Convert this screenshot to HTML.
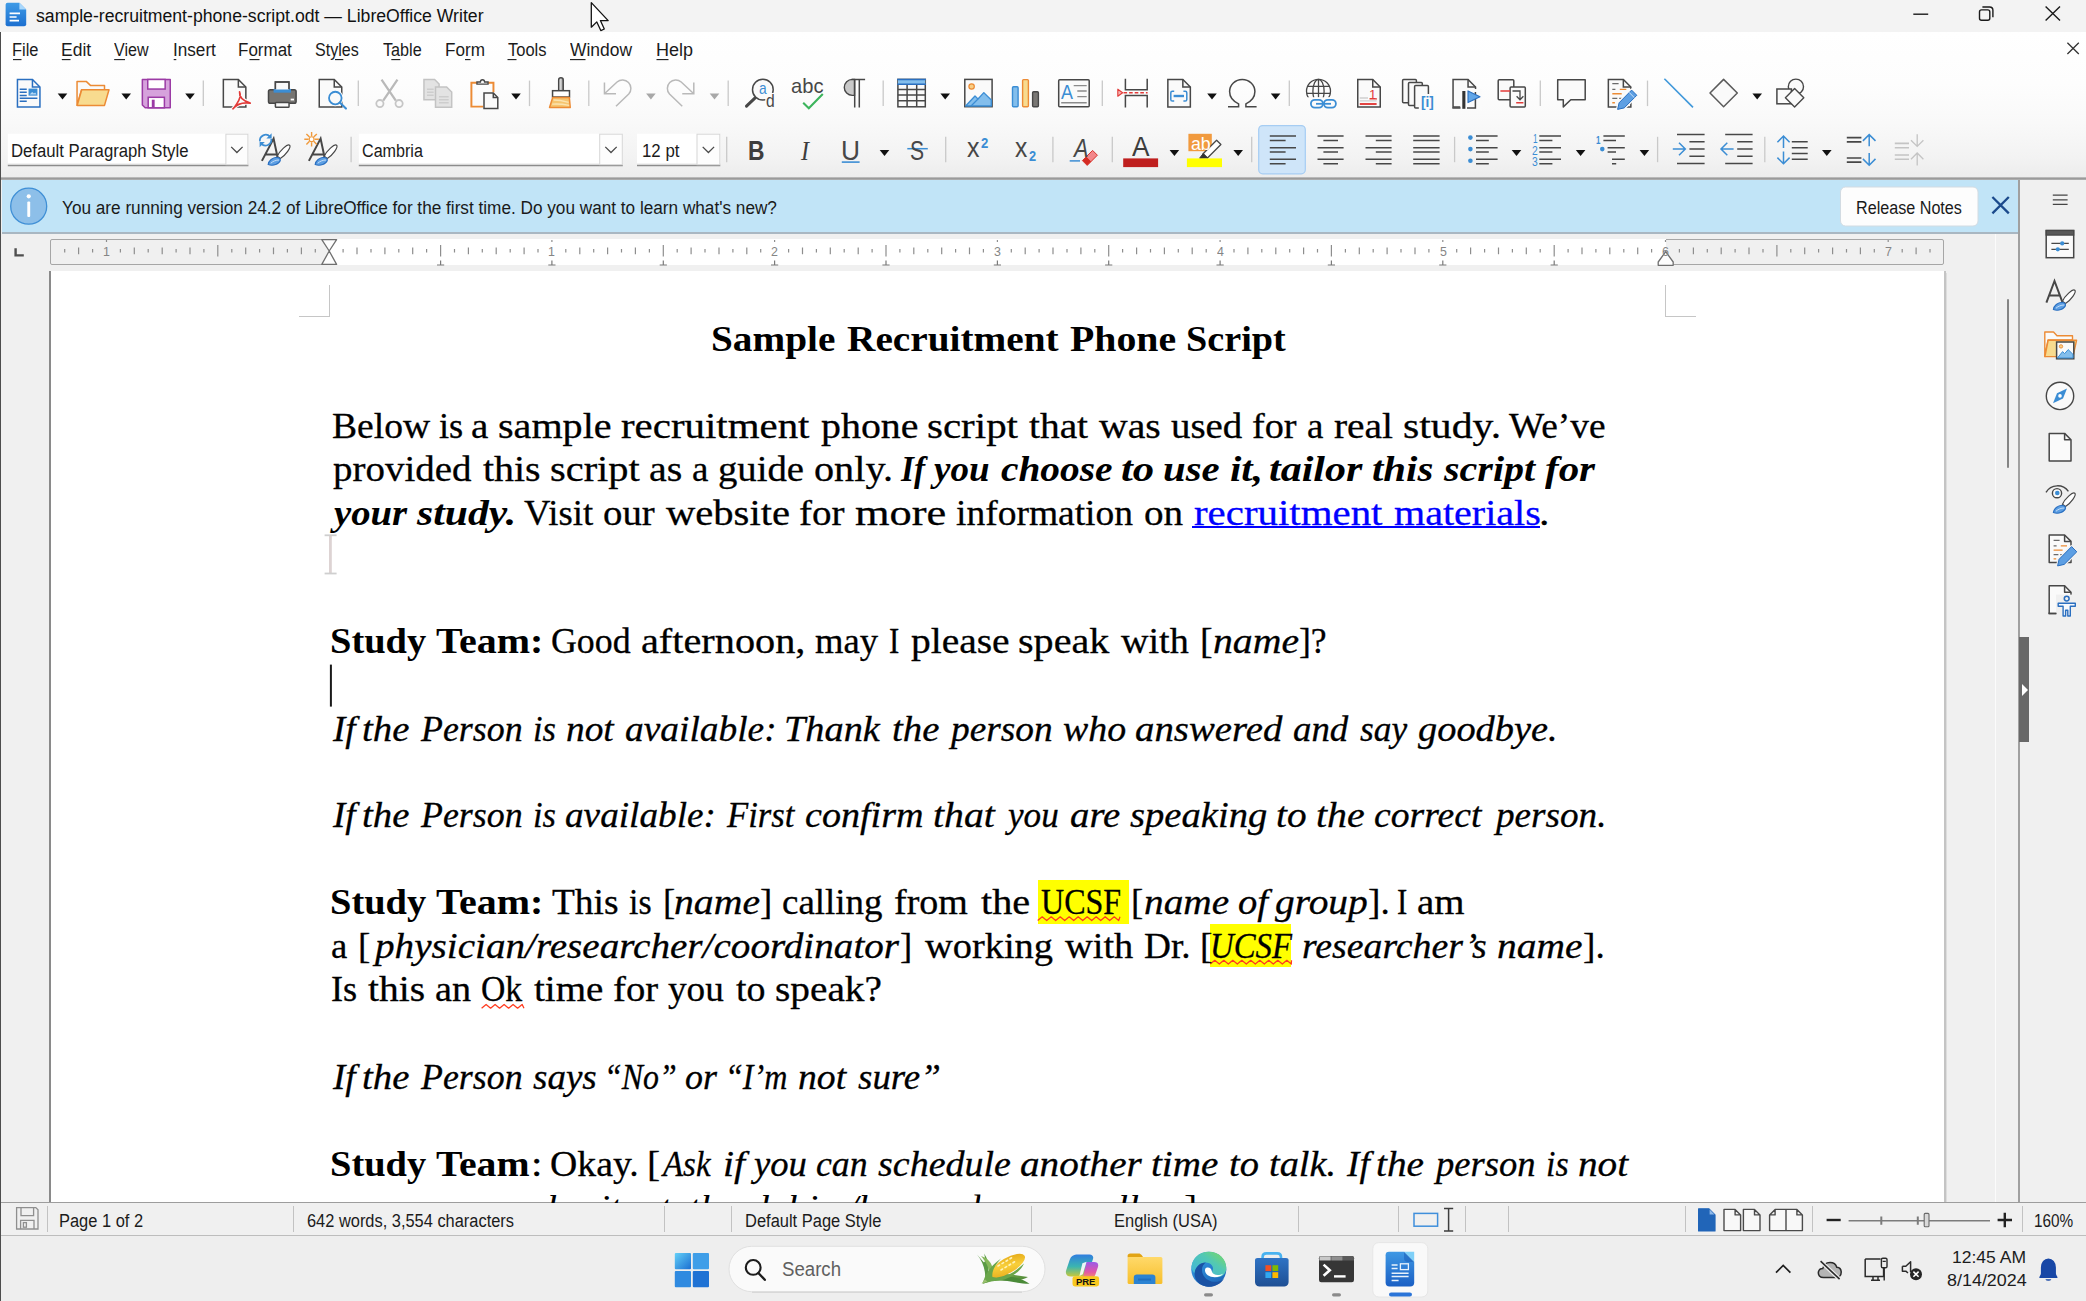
<!DOCTYPE html>
<html><head><meta charset="utf-8"><title>sample-recruitment-phone-script.odt — LibreOffice Writer</title>
<style>
html,body{margin:0;padding:0;}
body{width:2086px;height:1301px;position:relative;overflow:hidden;background:#f0f0f0;font-family:"Liberation Sans",sans-serif;}
.t{position:absolute;white-space:pre;transform-origin:0 0;display:block;}
svg{position:absolute;overflow:visible;}
</style></head><body>
<div style="position:absolute;left:0px;top:0px;width:2086px;height:32px;background:#f3f3f3;"></div>
<div style="position:absolute;left:0px;top:32px;width:2086px;height:146px;background:linear-gradient(#ffffff 0%,#fdfdfd 35%,#f9f9f9 62%,#f3f3f3 85%,#ececec 100%);"></div>
<div style="position:absolute;left:0px;top:177px;width:2086px;height:3px;background:linear-gradient(#c8c8c8,#9a9a9a 50%,#b4b4b4);"></div>
<div style="position:absolute;left:2px;top:180px;width:2017px;height:53px;background:#c1e4f7;"></div>
<div style="position:absolute;left:2px;top:232px;width:2017px;height:2px;background:#a9b7c2;"></div>
<div style="position:absolute;left:2px;top:234px;width:2017px;height:969px;background:#f0f0f0;"></div>
<div style="position:absolute;left:50px;top:239px;width:1894px;height:26px;background:#f0f0f0;border:1px solid #a6a6a6;border-radius:2px;box-sizing:border-box;"></div>
<div style="position:absolute;left:329px;top:239px;width:1337px;height:26px;background:#ffffff;"></div>
<div style="position:absolute;left:49px;top:271px;width:2px;height:932px;background:#8a8a8a;"></div>
<div style="position:absolute;left:51px;top:271px;width:1893px;height:932px;background:#ffffff;"></div>
<div style="position:absolute;left:1944px;top:271px;width:2px;height:932px;background:#c4c4c4;"></div>
<div style="position:absolute;left:1946px;top:273px;width:1px;height:930px;background:#dddddd;"></div>
<div style="position:absolute;left:1995px;top:234px;width:1px;height:969px;background:#fbfbfb;"></div>
<div style="position:absolute;left:1996px;top:234px;width:22px;height:969px;background:#f0f0f0;"></div>
<div style="position:absolute;left:2007px;top:299px;width:2px;height:169px;background:#858585;border-radius:1px;"></div>
<div style="position:absolute;left:2018px;top:180px;width:2px;height:1023px;background:#a0a0a0;"></div>
<div style="position:absolute;left:2020px;top:180px;width:66px;height:1023px;background:#f0f0f0;"></div>
<div style="position:absolute;left:2019px;top:637px;width:10px;height:105px;background:#686868;"></div>
<svg style="left:2021px;top:683px" width="8" height="14"><path d="M1 1 L7 7 L1 13Z" fill="#fff"/></svg>
<div style="position:absolute;left:329px;top:285px;width:1px;height:32px;background:#c6c6c6;"></div>
<div style="position:absolute;left:299px;top:316px;width:31px;height:1px;background:#c6c6c6;"></div>
<div style="position:absolute;left:1665px;top:285px;width:1px;height:32px;background:#c6c6c6;"></div>
<div style="position:absolute;left:1665px;top:316px;width:31px;height:1px;background:#c6c6c6;"></div>
<div style="position:absolute;left:0px;top:1202px;width:2086px;height:1px;background:#9d9d9d;"></div>
<div style="position:absolute;left:0px;top:1203px;width:2086px;height:32px;background:#f0f0f0;"></div>
<div style="position:absolute;left:0px;top:1235px;width:2086px;height:1px;background:#bdbdbd;"></div>
<div style="position:absolute;left:46.5px;top:1206px;width:1px;height:26px;background:#c2c2c2;"></div>
<div style="position:absolute;left:293px;top:1206px;width:1px;height:26px;background:#c2c2c2;"></div>
<div style="position:absolute;left:664px;top:1206px;width:1px;height:26px;background:#c2c2c2;"></div>
<div style="position:absolute;left:731px;top:1206px;width:1px;height:26px;background:#c2c2c2;"></div>
<div style="position:absolute;left:1031px;top:1206px;width:1px;height:26px;background:#c2c2c2;"></div>
<div style="position:absolute;left:1298px;top:1206px;width:1px;height:26px;background:#c2c2c2;"></div>
<div style="position:absolute;left:1398px;top:1206px;width:1px;height:26px;background:#c2c2c2;"></div>
<div style="position:absolute;left:1464.5px;top:1206px;width:1px;height:26px;background:#c2c2c2;"></div>
<div style="position:absolute;left:1508px;top:1206px;width:1px;height:26px;background:#c2c2c2;"></div>
<div style="position:absolute;left:1685px;top:1206px;width:1px;height:26px;background:#c2c2c2;"></div>
<div style="position:absolute;left:1812px;top:1206px;width:1px;height:26px;background:#c2c2c2;"></div>
<div style="position:absolute;left:2021.5px;top:1206px;width:1px;height:26px;background:#c2c2c2;"></div>
<div style="position:absolute;left:0px;top:1236px;width:2086px;height:65px;background:#eeeeee;"></div>
<div style="position:absolute;left:0px;top:32px;width:1.3px;height:1269px;background:#4d4d4d;"></div>
<div style="position:absolute;left:1037.7px;top:880.4px;width:91.3px;height:43.5px;background:#ffff00;"></div>
<div style="position:absolute;left:1210.3px;top:924.4px;width:81.2px;height:43.1px;background:#ffff00;"></div>
<div style="position:absolute;left:1192.4px;top:526.4px;width:347.6px;height:2px;background:#0000ff;"></div>
<svg style="left:0;top:0" width="2086" height="1301" viewBox="0 0 2086 1301"><path d="M1037.7 920.6L1042.2 916.8L1046.7 920.6L1051.2 916.8L1055.7 920.6L1060.2 916.8L1064.7 920.6L1069.2 916.8L1073.7 920.6L1078.2 916.8L1082.7 920.6L1087.2 916.8L1091.7 920.6L1096.2 916.8L1100.7 920.6L1105.2 916.8L1109.7 920.6L1114.2 916.8L1118.7 920.6L1120.0 916.8" fill="none" stroke="#ff3b1f" stroke-width="1.25" stroke-linejoin="round"/><path d="M1210.3 964.1L1214.8 960.3L1219.3 964.1L1223.8 960.3L1228.3 964.1L1232.8 960.3L1237.3 964.1L1241.8 960.3L1246.3 964.1L1250.8 960.3L1255.3 964.1L1259.8 960.3L1264.3 964.1L1268.8 960.3L1273.3 964.1L1277.8 960.3L1282.3 964.1L1286.8 960.3L1291.3 964.1L1291.5 960.3" fill="none" stroke="#ff3b1f" stroke-width="1.25" stroke-linejoin="round"/><path d="M481.6 1008.2L486.1 1004.4L490.6 1008.2L495.1 1004.4L499.6 1008.2L504.1 1004.4L508.6 1008.2L513.1 1004.4L517.6 1008.2L522.1 1004.4L524.0 1008.2" fill="none" stroke="#ff3b1f" stroke-width="1.25" stroke-linejoin="round"/><rect x="329.9" y="664.6" width="2" height="42" fill="#1a1a1a"/><rect x="329" y="535" width="2.8" height="39" fill="#ddd3d3"/><rect x="324.6" y="534.4" width="12" height="1.8" fill="#cfcfcf"/><rect x="324.6" y="572.6" width="12" height="1.8" fill="#cfcfcf"/></svg>
<svg style="left:0;top:0" width="2086" height="180" viewBox="0 0 2086 180"><path d="M203.3 80.6V106.1" stroke="#c9c9c9" stroke-width="1.3"/><path d="M358.3 80.6V106.1" stroke="#c9c9c9" stroke-width="1.3"/><path d="M529.5 80.6V106.1" stroke="#c9c9c9" stroke-width="1.3"/><path d="M588.8 80.6V106.1" stroke="#c9c9c9" stroke-width="1.3"/><path d="M728.2 80.6V106.1" stroke="#c9c9c9" stroke-width="1.3"/><path d="M883.2 80.6V106.1" stroke="#c9c9c9" stroke-width="1.3"/><path d="M1102.3 80.6V106.1" stroke="#c9c9c9" stroke-width="1.3"/><path d="M1289.3 80.6V106.1" stroke="#c9c9c9" stroke-width="1.3"/><path d="M1540.3 80.6V106.1" stroke="#c9c9c9" stroke-width="1.3"/><path d="M1647.5 80.6V106.1" stroke="#c9c9c9" stroke-width="1.3"/><path d="M57.7 93.4H67.3L62.5 99.4Z" fill="#111"/><path d="M121.4 93.4H131.0L126.2 99.4Z" fill="#111"/><path d="M185.2 93.4H194.8L190 99.4Z" fill="#111"/><path d="M511.2 93.4H520.8L516 99.4Z" fill="#111"/><path d="M940.4000000000001 93.4H950.0L945.2 99.4Z" fill="#111"/><path d="M1207.2 93.4H1216.8L1212 99.4Z" fill="#111"/><path d="M1270.8 93.4H1280.3999999999999L1275.6 99.4Z" fill="#111"/><path d="M1752.4 93.4H1762.0L1757.2 99.4Z" fill="#111"/><path d="M646.1 93.4H655.6999999999999L650.9 99.4Z" fill="#a8a8a8"/><path d="M709.7 93.4H719.3L714.5 99.4Z" fill="#a8a8a8"/><g transform="translate(10.7,75.7) scale(1.5)"><path d="M4.5 2.5H14.5L19.5 7.5V20.9H4.5Z" fill="#fafafa" stroke="#2a6fc0"/><path d="M14.5 2.5V7.5H19.5" fill="none" stroke="#2a6fc0"/><path d="M6 9.1H10.7M6 11.1H10.7M6 13.2H10.7M6 15.1H17.8M6 17.1H10.7" stroke="#2a6fc0" stroke-width="1"/><rect x="11.9" y="8.6" width="5.9" height="4.7" fill="#3b8dd4"/><path d="M12.6 12.6L14.3 10.8L15.5 11.9L16.3 11.2L17.2 12.6Z" fill="#b9daf5"/></g><g transform="translate(74.8,75.7) scale(1.5)"><path d="M1.5 19.7V3.8H7.6L10.6 6.6H19.8V9.3H4.5Z" fill="#fafafa" stroke="#ec8b35" stroke-linejoin="round"/><path d="M1.6 19.8L4.6 9.4H22.8L19.8 19.8Z" fill="#f8db8f" stroke="#ec8b35" stroke-linejoin="round"/></g><g transform="translate(138.3,75.7) scale(1.5)"><path d="M2.7 2.5H21.3V21.4H4.6L2.7 19.5Z" fill="#d6a2dc" stroke="#9b3ba5" stroke-linejoin="round"/><rect x="6.3" y="2.5" width="11.6" height="6.4" fill="#fff" stroke="#9b3ba5"/><rect x="6.6" y="14.4" width="10.8" height="7" fill="#fff" stroke="#9b3ba5"/><rect x="9" y="16" width="1.9" height="5.3" fill="#9b3ba5"/></g><g transform="translate(216.6,75.7) scale(1.5)"><path d="M4.5 2.5H14.5L19.5 7.5V20.9H4.5Z" fill="#fafafa" stroke="#474747"/><path d="M14.5 2.5V7.5H19.5" fill="none" stroke="#474747"/></g><g transform="translate(216.6,75.7) scale(1.5)"><path d="M15.3 10.8C16.6 13.5 15 16.5 13.4 18.8 12.4 20.3 11.8 21.4 10.9 22.1M15.3 10.8C15 13.6 17.2 16.6 22.4 18.3M10.9 22.1C13.2 19.2 17 17.6 22.4 18.3" fill="none" stroke="#fbfbfb" stroke-width="2.6"/><path d="M15.3 10.8C16.6 13.5 15 16.5 13.4 18.8 12.4 20.3 11.8 21.4 10.9 22.1M15.3 10.8C15 13.6 17.2 16.6 22.4 18.3M10.9 22.1C13.2 19.2 17 17.6 22.4 18.3" fill="none" stroke="#e23b39" stroke-width="1.1" stroke-linecap="round"/></g><g transform="translate(264.3,75.7) scale(1.5)"><rect x="7.4" y="4.2" width="9" height="6" fill="#fafafa" stroke="#474747"/><rect x="2.8" y="9.4" width="18.4" height="9" rx="1.2" fill="#777572" stroke="#474747"/><rect x="6.2" y="8.8" width="11.6" height="2.5" fill="#3b8dd4"/><rect x="7.4" y="5" width="9" height="4.2" fill="#fafafa"/><path d="M7.4 9V4.2H16.4V9" fill="none" stroke="#474747"/><rect x="17.6" y="15.3" width="2.2" height="1.2" fill="#fff"/><rect x="7.4" y="17.9" width="9.1" height="3.2" rx=".5" fill="#fafafa" stroke="#474747"/></g><g transform="translate(312.5,75.7) scale(1.5)"><path d="M4.5 2.5H14.5L19.5 7.5V20.9H4.5Z" fill="#fafafa" stroke="#474747"/><path d="M14.5 2.5V7.5H19.5" fill="none" stroke="#474747"/></g><g transform="translate(312.5,75.7) scale(1.5)"><circle cx="15.2" cy="14.9" r="4.2" fill="#fafafa" stroke="#fbfbfb" stroke-width="2.6"/><circle cx="15.2" cy="14.9" r="4.2" fill="#fafafa" stroke="#3b8dd4" stroke-width="1.2"/><path d="M18.2 17.9L22.3 21.9" stroke="#3b8dd4" stroke-width="1.4" stroke-linecap="round"/></g><g transform="translate(371.5,75.7) scale(1.5)"><path d="M6.7 2.6L16.2 16.6M17.3 2.6L7.8 16.6" stroke="#b9b9b9" stroke-width="1.5" fill="none"/><circle cx="5.6" cy="18.6" r="2.4" fill="none" stroke="#c6c6c6" stroke-width="1.2"/><circle cx="18.4" cy="18.6" r="2.4" fill="none" stroke="#c6c6c6" stroke-width="1.2"/></g><g transform="translate(421.7,75.7) scale(1.5)"><path d="M1.5 2.5H8.6L11.6 5.5V16H1.5Z" fill="#e3e3e3" stroke="#c3c3c3"/><path d="M3.5 9H8M3.5 11H8M3.5 13H8" stroke="#cdcdcd"/><path d="M9.2 7.5H16.6L20 10.9V21.1H9.2Z" fill="#e3e3e3" stroke="#c3c3c3"/><path d="M11.5 14H18M11.5 16H18M11.5 18H18" stroke="#cdcdcd"/></g><g transform="translate(467.5,75.7) scale(1.5)"><path d="M6.5 4.7H2.6V20.6H10.4M13.3 4.7H17.3V11" fill="none" stroke="#ec8b35" stroke-width="1.3"/><path d="M6.3 5.6V4.2H8.6C8.6 2.2 11.4 2.2 11.4 4.2H13.7V5.6Z" fill="#fafafa" stroke="#474747" stroke-width=".9"/><path d="M11 11.5H17.2L20.2 14.5V21.8H11Z" fill="#fafafa" stroke="#474747"/><path d="M17.2 11.5V14.5H20.2" fill="none" stroke="#474747"/></g><g transform="translate(542.2,75.7) scale(1.5)"><defs><linearGradient id="hg" x1="0" x2="1"><stop offset="0" stop-color="#fff"/><stop offset="1" stop-color="#9a9a9a"/></linearGradient></defs><path d="M11 10V2.8C11 .9 14 .9 14 2.8V10Z" fill="url(#hg)" stroke="#474747"/><rect x="6.9" y="10" width="11.3" height="4.2" fill="#fff" stroke="#474747"/><path d="M7 14.6H18.1L18.7 21.2H4.9Z" fill="#f6c56f" stroke="#ec8b35" stroke-linejoin="round"/><path d="M7.6 16.2C11 16.2 14 16.8 17.6 17.8M6.6 19C10 18.6 14 19 18 19.8" stroke="#fbe3b0" stroke-width=".9" fill="none"/></g><g transform="translate(599.5,75.7) scale(1.5)"><path d="M3.3 4.5V12H11M3.3 12L11.7 4.2A5.6 5.6 0 0 1 19.5 12.2L11 20.4" fill="none" stroke="#b9b9b9" stroke-width="1"/></g><g transform="translate(698.75,75.7) scale(-1.5,1.5)"><path d="M3.3 4.5V12H11M3.3 12L11.7 4.2A5.6 5.6 0 0 1 19.5 12.2L11 20.4" fill="none" stroke="#b9b9b9" stroke-width="1"/></g><g transform="translate(742,75.7) scale(1.5)"><circle cx="13.9" cy="9.3" r="6.9" fill="#fafafa" stroke="#474747"/><path d="M8.6 14.9L3 20.3" stroke="#474747" stroke-width="2" stroke-linecap="round"/><rect x="15.5" y="11.5" width="8" height="10.5" fill="#fbfbfb"/></g><path d="M803.2 102.8L808.8 108.2L822.8 93.9" fill="none" stroke="#3cb45c" stroke-width="2.1"/><path d="M854.5 79.4H852.3A8 8 0 0 0 852.3 95.4H854.5Z" fill="#c9c9c9" stroke="#474747" stroke-width="1.4"/><path d="M851.5 79.4H865.1M854.7 79.4V107.4M859.3 79.4V107.4" stroke="#474747" stroke-width="1.5" fill="none"/><rect x="897.9" y="79.4" width="27.4" height="27.4" fill="#fafafa" stroke="#474747" stroke-width="1.5"/><path d="M907.1 84V106.8M916.7 84V106.8M897.9 89.4H925.3M897.9 95H925.3M897.9 100.7H925.3" stroke="#474747" stroke-width="1.5"/><rect x="897.9" y="79.4" width="27.4" height="4.8" fill="#83beec"/><path d="M897.2 84.2H926M897.2 79.4H926" stroke="#2a6fc0" stroke-width="1.5"/><rect x="964.8" y="79.4" width="27.3" height="27.3" fill="#fafafa" stroke="#474747" stroke-width="1.5"/><path d="M965.6 106L975 96L978 99L983.8 92.6L991.3 100V106Z" fill="#83beec" stroke="#3b8dd4" stroke-width="1.3" stroke-linejoin="round"/><path d="M971 106L978 99" stroke="#3b8dd4" stroke-width="1.3"/><circle cx="971.6" cy="86.5" r="2.7" fill="#f8cf86" stroke="#ec8b35" stroke-width="1.2"/><rect x="1012.5" y="86.8" width="5.6" height="20" rx="1" fill="#83beec" stroke="#3b8dd4" stroke-width="1.4"/><rect x="1022.6" y="79.6" width="5.8" height="27.2" rx="1" fill="#f8db8f" stroke="#ec8b35" stroke-width="1.4"/><rect x="1032.6" y="91.8" width="5.8" height="15" rx="1" fill="#797774" stroke="#474747" stroke-width="1.4"/><rect x="1058.7" y="79.7" width="30.5" height="27" rx="1" fill="#fafafa" stroke="#474747" stroke-width="1.5"/><path d="M1073.7 85.6H1086.7M1077.3 91H1086.7M1077.3 96.6H1086.7M1061.2 102.7H1086.7" stroke="#8b8b8b" stroke-width="1.4"/><path d="M1125.4 78.8V89.8H1147.2V78.8M1125.4 107.4V95.6H1147.2V107.4" fill="none" stroke="#474747" stroke-width="1.5"/><path d="M1123.5 92.7H1147.6" stroke="#e23b39" stroke-width="1.4" stroke-dasharray="3.6 2"/><path d="M1117.8 89.2V96.2L1122.6 92.7Z" fill="#f5b5b3" stroke="#e23b39" stroke-width="1.1" stroke-linejoin="round"/><g transform="translate(1161.1,75.7) scale(1.5)"><path d="M4.5 2.5H14.5L19.5 7.5V20.9H4.5Z" fill="#fafafa" stroke="#474747"/><path d="M14.5 2.5V7.5H19.5" fill="none" stroke="#474747"/></g><path d="M1174.2 91.2H1172.4C1171.2 91.2 1170.8 91.8 1170.8 92.8V99.4C1170.8 100.4 1171.2 101 1172.4 101H1174.2M1183.4 91.2H1185.2C1186.4 91.2 1186.8 91.8 1186.8 92.8V99.4C1186.8 100.4 1186.4 101 1185.2 101H1183.4" fill="none" stroke="#3b8dd4" stroke-width="1.5"/><path d="M1173.6 96H1184" stroke="#3b8dd4" stroke-width="2.4"/><path d="M1228 106.8H1238.6V103.9C1233 101.3 1229.6 97 1229.6 91.6A12.6 12.1 0 0 1 1254.9 91.6C1254.9 97 1251.5 101.3 1245.9 103.9V106.8H1256.6" fill="none" stroke="#474747" stroke-width="1.5"/><clipPath id="gc"><rect x="1300" y="70" width="40" height="27.2"/></clipPath><g clip-path="url(#gc)" fill="none" stroke="#474747" stroke-width="1.3"><circle cx="1318.5" cy="91.3" r="12"/><ellipse cx="1318.5" cy="91.3" rx="5.6" ry="12"/><path d="M1318.5 79V104M1307.5 86.3H1329.5M1306.5 93.4H1330.5"/></g><g fill="none" stroke="#fbfbfb" stroke-width="4.5"><rect x="1310.9" y="99.8" width="12" height="7.9" rx="3.9"/><rect x="1323.9" y="99.8" width="12" height="7.9" rx="3.9"/></g><g fill="none" stroke="#3b8dd4" stroke-width="1.8"><rect x="1310.9" y="99.8" width="12" height="7.9" rx="3.9"/><rect x="1323.9" y="99.8" width="12" height="7.9" rx="3.9"/><path d="M1316 103.8H1331"/></g><g transform="translate(1351,75.7) scale(1.5)"><path d="M4.5 2.5H14.5L19.5 7.5V20.9H4.5Z" fill="#fafafa" stroke="#474747"/><path d="M14.5 2.5V7.5H19.5" fill="none" stroke="#474747"/></g><path d="M1359.8 98H1368M1359.8 100.9H1376.6" stroke="#cfcfcf" stroke-width="1.4"/><path d="M1359.8 104H1376.6" stroke="#e23b39" stroke-width="1.9"/><path d="M1369.5 98.9H1377" stroke="#e23b39" stroke-width="1.2"/><g fill="#fafafa" stroke="#474747" stroke-width="1.5" stroke-linejoin="round"><rect x="1402.6" y="79.6" width="13.8" height="23.2" rx="1"/><rect x="1408.5" y="82.4" width="13.8" height="23.2" rx="1"/><rect x="1414.6" y="85.6" width="13.8" height="22.4" rx="1"/></g><rect x="1418.8" y="94" width="16.4" height="16" fill="#fbfbfb"/><g transform="translate(1446.3,75.7) scale(1.5)"><path d="M4.5 2.5H14.5L19.5 7.5V20.9H4.5Z" fill="#fafafa" stroke="#474747"/><path d="M14.5 2.5V7.5H19.5" fill="none" stroke="#474747"/></g><rect x="1460.2" y="89" width="21.5" height="20.5" fill="#fbfbfb"/><path d="M1452.3 107.9H1460.5M1467 107.9H1475.4V92" stroke="#474747" stroke-width="1.5" fill="none"/><rect x="1462.3" y="91" width="3.1" height="17.8" fill="#333"/><path d="M1468 90.9L1480 96.7L1468 102.6Z" fill="#62a6e8" stroke="#2a6fc0" stroke-width="1.1" stroke-linejoin="round"/><rect x="1498.2" y="79.7" width="15.6" height="20" rx="1" fill="#fafafa" stroke="#474747" stroke-width="1.5"/><rect x="1510.1" y="86.9" width="15.2" height="20" rx="1" fill="#fafafa" stroke="#474747" stroke-width="1.5"/><path d="M1500.4 91H1510M1516.2 102.7H1523.4" stroke="#e23b39" stroke-width="1.5"/><path d="M1512.5 91H1520V99.3M1516.6 96.3L1520 99.8L1523.4 96.3" fill="none" stroke="#474747" stroke-width="1.3"/><path d="M1557.7 79.8H1585.2V99.7H1570.8L1563.3 106.9V99.7H1557.7Z" fill="#fafafa" stroke="#474747" stroke-width="1.5" stroke-linejoin="round"/><g transform="translate(1601.6,75.7) scale(1.5)"><path d="M4.5 2.5H14.5L19.5 7.5V20.9H4.5Z" fill="#fafafa" stroke="#474747"/><path d="M14.5 2.5V7.5H19.5" fill="none" stroke="#474747"/></g><path d="M1612.3 83.6H1618.6M1612.3 89.4H1615.4M1612.3 98.4H1617.3M1619.2 98.4H1621.7" stroke="#6a6a6a" stroke-width="1.4"/><path d="M1619.8 89.4H1626.3M1612.3 93.8H1621.7M1612.3 102.8H1614.9" stroke="#ec8b35" stroke-width="1.4"/><path d="M1631.6 90.1l5.2 5.2l-12.6 12.6l-6.6 1.5l1.5 -6.6Z" fill="#5d9fe3" stroke="#fbfbfb" stroke-width="3.4" stroke-linejoin="round"/><path d="M1631.6 90.1l5.2 5.2l-12.6 12.6l-6.6 1.5l1.5 -6.6Z" fill="#5d9fe3" stroke="#2a6fc0" stroke-width="1" stroke-linejoin="round"/><path d="M1629.2 92.5l5.2 5.2" stroke="#cfe3f8" stroke-width="1"/><path d="M1664.4 78.8L1693 107.4" stroke="#3f98da" stroke-width="1.6"/><path d="M1723.6 79.4L1737.3 93L1723.6 106.7L1710 93Z" fill="#fafafa" stroke="#5a5a5a" stroke-width="1.5" stroke-linejoin="round"/><circle cx="1795.9" cy="86.7" r="7.6" fill="#fafafa" stroke="#474747" stroke-width="1.4"/><rect x="1776.9" y="89" width="14.5" height="14.8" fill="#fafafa" stroke="#474747" stroke-width="1.5"/><path d="M1794.6 88.4L1803.8 97.7L1794.6 106.9L1785.4 97.7Z" fill="#fafafa" stroke="#474747" stroke-width="1.4" stroke-linejoin="round"/><defs><linearGradient id="lo" x1="0" y1="0" x2="0" y2="1"><stop offset="0" stop-color="#3f9be6"/><stop offset="1" stop-color="#1c6fd0"/></linearGradient></defs><path d="M7.6 2.8H19.4L26.2 9.6V24.2Q26.2 26.2 24.2 26.2H7.6Q5.6 26.2 5.6 24.2V4.8Q5.6 2.8 7.6 2.8Z" fill="url(#lo)"/><path d="M19.4 2.8L26.2 9.6H19.4Z" fill="#a9d8fc"/><path d="M9.6 13.4H20M9.6 17H16.6M9.6 20.6H19" stroke="#fff" stroke-width="1.7"/><path d="M591.3 2.6V27.2L596.8 21.9L600.8 30.6L604.3 29L600.4 20.6H608.2Z" fill="#fff" stroke="#111" stroke-width="1.3" stroke-linejoin="round"/><path d="M1913.3 14.2H1928.2" stroke="#1a1a1a" stroke-width="1.4"/><rect x="1979.5" y="9.9" width="10.3" height="10.3" rx="2" fill="none" stroke="#1a1a1a" stroke-width="1.4"/><path d="M1982.4 7H1989.6Q1992.9 7 1992.9 10.3V17.3" fill="none" stroke="#1a1a1a" stroke-width="1.4"/><path d="M2045.6 6.6L2060 20.6M2060 6.6L2045.6 20.6" stroke="#1a1a1a" stroke-width="1.4"/><path d="M2067.4 42.7L2078.8 54M2078.8 42.7L2067.4 54" stroke="#333" stroke-width="1.3"/><path d="M351.1 136.8V162.2" stroke="#c9c9c9" stroke-width="1.3"/><path d="M726.7 136.8V162.2" stroke="#c9c9c9" stroke-width="1.3"/><path d="M945.7 136.8V162.2" stroke="#c9c9c9" stroke-width="1.3"/><path d="M1052.9 136.8V162.2" stroke="#c9c9c9" stroke-width="1.3"/><path d="M1112.3 136.8V162.2" stroke="#c9c9c9" stroke-width="1.3"/><path d="M1251.7 136.8V162.2" stroke="#c9c9c9" stroke-width="1.3"/><path d="M1454.6 136.8V162.2" stroke="#c9c9c9" stroke-width="1.3"/><path d="M1657.6 136.8V162.2" stroke="#c9c9c9" stroke-width="1.3"/><path d="M1764.8 136.8V162.2" stroke="#c9c9c9" stroke-width="1.3"/><path d="M879.7 150.1H889.3L884.5 156.1Z" fill="#111"/><path d="M1169.6000000000001 150.1H1179.2L1174.4 156.1Z" fill="#111"/><path d="M1233.4 150.1H1243.0L1238.2 156.1Z" fill="#111"/><path d="M1511.7 150.1H1521.3L1516.5 156.1Z" fill="#111"/><path d="M1575.8 150.1H1585.3999999999999L1580.6 156.1Z" fill="#111"/><path d="M1639.6000000000001 150.1H1649.2L1644.4 156.1Z" fill="#111"/><path d="M1822.0 150.1H1831.6L1826.8 156.1Z" fill="#111"/><rect x="7.8" y="133.7" width="240.6" height="32" fill="#fff"/><path d="M7.8 165.4H248.4" stroke="#8c8c8c" stroke-width="1.5"/><path d="M7.8 164.2H248.4" stroke="#d4d4d4" stroke-width="1"/><rect x="225.9" y="134.2" width="22.0" height="30.5" fill="#fdfdfd" stroke="#d6d6d6" stroke-width="1"/><path d="M231.20000000000002 146.9L236.9 152.5L242.6 146.9" fill="none" stroke="#4a4a4a" stroke-width="1.3"/><rect x="358.8" y="133.7" width="263.99999999999994" height="32" fill="#fff"/><path d="M358.8 165.4H622.8" stroke="#8c8c8c" stroke-width="1.5"/><path d="M358.8 164.2H622.8" stroke="#d4d4d4" stroke-width="1"/><rect x="599.7" y="134.2" width="22.59999999999991" height="30.5" fill="#fdfdfd" stroke="#d6d6d6" stroke-width="1"/><path d="M605.3 146.9L611.0 152.5L616.7 146.9" fill="none" stroke="#4a4a4a" stroke-width="1.3"/><rect x="637" y="133.7" width="83.29999999999995" height="32" fill="#fff"/><path d="M637 165.4H720.3" stroke="#8c8c8c" stroke-width="1.5"/><path d="M637 164.2H720.3" stroke="#d4d4d4" stroke-width="1"/><rect x="697.0" y="134.2" width="22.799999999999955" height="30.5" fill="#fdfdfd" stroke="#d6d6d6" stroke-width="1"/><path d="M702.6999999999999 146.9L708.4 152.5L714.1 146.9" fill="none" stroke="#4a4a4a" stroke-width="1.3"/><g transform="translate(0,0)"><path d="M261.9 160.9L273.6 138.6L277.6 157.5M265.8 154.4H276.6" fill="none" stroke="#474747" stroke-width="2"/><path d="M289.6 145.2C291.6 147 285.6 155.3 280.3 158.4L277.3 156.2C279.3 151.2 287.6 143.4 289.6 145.2Z" fill="#fff" stroke="#474747" stroke-width="1.2"/><path d="M268.2 164.6C268.6 160.6 272.6 157.4 277 157.2C279.4 157.6 280.6 159 280.3 160.4C279.3 164 273.2 166.3 268.2 164.6Z" fill="#5d9fe3" stroke="#2a6fc0" stroke-width="1.1"/><path d="M270.8 163.2C273 161.2 276 160 279 160" stroke="#cfe3f8" stroke-width=".9" fill="none"/></g><g transform="translate(47,0)"><path d="M261.9 160.9L273.6 138.6L277.6 157.5M265.8 154.4H276.6" fill="none" stroke="#474747" stroke-width="2"/><path d="M289.6 145.2C291.6 147 285.6 155.3 280.3 158.4L277.3 156.2C279.3 151.2 287.6 143.4 289.6 145.2Z" fill="#fff" stroke="#474747" stroke-width="1.2"/><path d="M268.2 164.6C268.6 160.6 272.6 157.4 277 157.2C279.4 157.6 280.6 159 280.3 160.4C279.3 164 273.2 166.3 268.2 164.6Z" fill="#5d9fe3" stroke="#2a6fc0" stroke-width="1.1"/><path d="M270.8 163.2C273 161.2 276 160 279 160" stroke="#cfe3f8" stroke-width=".9" fill="none"/></g><g fill="none" stroke="#3b8dd4" stroke-width="1.7"><path d="M259.9 141.4A5.9 5.9 0 0 1 270 136.6"/><path d="M271.3 138.9A5.9 5.9 0 0 1 261.2 143.7"/></g><path d="M271.6 133.2V138.4H266.4Z" fill="#3b8dd4"/><path d="M259.6 147.2V142H264.8Z" fill="#3b8dd4"/><path d="M314.6 139.2L318.9 139.2M313.7 141.3L316.8 144.4M311.6 142.2L311.6 146.5M309.5 141.3L306.4 144.4M308.6 139.2L304.3 139.2M309.5 137.1L306.4 134.0M311.6 136.2L311.6 131.9M313.7 137.1L316.8 134.0" stroke="#f09a3c" stroke-width="1.4"/><circle cx="311.6" cy="139.2" r="2.4" fill="#fff" stroke="#f09a3c" stroke-width="1.1"/><path d="M841.8 162.1H859.6" stroke="#3b8dd4" stroke-width="1.6"/><path d="M907.3 148.7H927.8" stroke="#3b8dd4" stroke-width="1.5"/><path d="M1069.7 160.9H1080" stroke="#3b8dd4" stroke-width="1.5"/><path d="M1092.6 150.4L1097.4 155.2L1091.2 161.4L1086.4 156.6Z" fill="#f3868a"/><path d="M1086.4 156.6L1091.2 161.4L1087.2 165.4L1082.4 160.6Z" fill="#d52b22"/><path d="M1092.6 150.4L1097.4 155.2L1087.2 165.4L1082.4 160.6Z" fill="none" stroke="#d8342c" stroke-width="1" stroke-linejoin="round"/><rect x="1123.2" y="158.4" width="34.9" height="8.7" fill="#bf1f1e"/><rect x="1188.4" y="133.8" width="23.4" height="17.4" fill="#f19a3e"/><path d="M1216.6 140.2L1220.9 144.5L1207.4 158L1203.1 153.7Z" fill="#fff" stroke="#474747" stroke-width="1.3" stroke-linejoin="round"/><path d="M1203.1 153.7L1207.4 158L1199.6 158.2Z" fill="#333" stroke="#333" stroke-width="1" stroke-linejoin="round"/><rect x="1186.9" y="158.4" width="35.1" height="8.7" fill="#ffff00"/><rect x="1258.7" y="125.6" width="46.6" height="48.2" rx="4" fill="#cfe5f9" stroke="#a6cdf3" stroke-width="1.2"/><path d="M1269.8 136H1296M1269.8 140.5H1285.6M1269.8 147.7H1296M1269.8 152.1H1285.6M1269.8 159.3H1296M1269.8 163.7H1285.6" stroke="#474747" stroke-width="1.5"/><path d="M1317.5 136H1343.6M1323.4 140.5H1338M1317.5 147.7H1343.6M1323.4 152.1H1338M1317.5 159.3H1343.6M1323.4 163.7H1338" stroke="#474747" stroke-width="1.5"/><path d="M1365.5 136H1391.6M1375.8 140.5H1391.6M1365.5 147.7H1391.6M1375.8 152.1H1391.6M1365.5 159.3H1391.6M1375.8 163.7H1391.6" stroke="#474747" stroke-width="1.5"/><path d="M1413.2 136H1439.6M1413.2 140.5H1439.6M1413.2 147.7H1439.6M1413.2 152.1H1439.6M1413.2 159.3H1439.6M1413.2 163.7H1439.6" stroke="#474747" stroke-width="1.5"/><path d="M1476 136H1497.6M1476 140.5H1488.8M1476 147.7H1497.6M1476 152.1H1488.8M1476 159.3H1497.6M1476 163.7H1488.8" stroke="#474747" stroke-width="1.5"/><circle cx="1470.4" cy="137.6" r="2.3" fill="#3b8dd4"/><circle cx="1470.4" cy="149.1" r="2.3" fill="#3b8dd4"/><circle cx="1470.4" cy="160.8" r="2.3" fill="#3b8dd4"/><path d="M1539.3 136H1561M1539.3 140.5H1552.4M1539.3 147.7H1561M1539.3 152.1H1552.4M1539.3 159.3H1561M1539.3 163.7H1552.4" stroke="#474747" stroke-width="1.5"/><path d="M1603.4 136H1624.8M1603.4 140.5H1616M1607.6 147.7H1624.8M1607.6 152.1H1616M1612 159.3H1624.8M1612 163.7H1616.2" stroke="#474747" stroke-width="1.5"/><circle cx="1602.3" cy="149.1" r="2.3" fill="#3b8dd4"/><path d="M1677 134.4H1704.6M1689.4 141.7H1704.6M1689.4 149H1704.6M1689.4 156.3H1704.6M1677 163.6H1704.6" stroke="#474747" stroke-width="1.5"/><path d="M1672.8 149H1685M1679 142.8L1685.3 149L1679 155.2" fill="none" stroke="#3b8dd4" stroke-width="1.5"/><path d="M1725.2 134.4H1752.6M1737.2 141.7H1752.6M1737.2 149H1752.6M1737.2 156.3H1752.6M1725.2 163.6H1752.6" stroke="#474747" stroke-width="1.5"/><path d="M1733.6 149H1721.2M1727.3 142.8L1721 149L1727.3 155.2" fill="none" stroke="#3b8dd4" stroke-width="1.5"/><path d="M1791.8 141.7H1807.7M1791.8 147.7H1807.7M1791.8 153.5H1807.7M1791.8 159.3H1807.7" stroke="#474747" stroke-width="1.5"/><path d="M1783.5 136V148M1777.4 142.2L1783.5 136L1789.6 142.2M1783.5 151.5V163.8M1777.4 157.6L1783.5 163.8L1789.6 157.6" fill="none" stroke="#3b8dd4" stroke-width="1.5"/><path d="M1846.8 137.6H1861.4M1846.8 141.9H1861.4M1846.8 158H1861.4M1846.8 162.2H1861.4" stroke="#474747" stroke-width="1.7"/><path d="M1869.2 134.6V146.3M1862.9 140.9L1869.2 134.6L1875.5 140.9M1869.2 153V165.2M1862.9 158.9L1869.2 165.2L1875.5 158.9" fill="none" stroke="#3b8dd4" stroke-width="1.5"/><path d="M1894.8 143.4H1909M1894.8 147.8H1909M1894.8 155H1909M1894.8 159.3H1909" stroke="#c4c4c4" stroke-width="1.6"/><path d="M1917.2 134.2V146.3M1911 140.2L1917.2 146.4L1923.4 140.2M1917.2 153V165.4M1911 159.2L1917.2 153L1923.4 159.2" fill="none" stroke="#c4c4c4" stroke-width="1.3"/></svg>
<svg style="left:0;top:0" width="2086" height="1301" viewBox="0 0 2086 1301"><path d="M13 59.6H21.5" stroke="#1b1b1b" stroke-width="1.1"/><path d="M61.8 59.6H70.5" stroke="#1b1b1b" stroke-width="1.1"/><path d="M114.2 59.6H125" stroke="#1b1b1b" stroke-width="1.1"/><path d="M173.7 59.6H176.3" stroke="#1b1b1b" stroke-width="1.1"/><path d="M249.5 59.6H259.5" stroke="#1b1b1b" stroke-width="1.1"/><path d="M335 59.6H343.3" stroke="#1b1b1b" stroke-width="1.1"/><path d="M391.3 59.6H400.3" stroke="#1b1b1b" stroke-width="1.1"/><path d="M465 59.6H470.5" stroke="#1b1b1b" stroke-width="1.1"/><path d="M507.5 59.6H516.5" stroke="#1b1b1b" stroke-width="1.1"/><path d="M570 59.6H585.5" stroke="#1b1b1b" stroke-width="1.1"/><path d="M656.5 59.6H668.5" stroke="#1b1b1b" stroke-width="1.1"/><circle cx="28.7" cy="206.2" r="18" fill="#8dbfe9" stroke="#3f8fd6" stroke-width="1.3"/><rect x="27.3" y="201.5" width="2.9" height="15.5" rx="1" fill="#fff"/><circle cx="28.75" cy="196.3" r="2.1" fill="#fff"/><rect x="1840.5" y="187" width="137.5" height="39" rx="5" fill="#fdfdfd" stroke="#d2dbe2" stroke-width="1"/><path d="M1992.4 197L2008.8 213.4M2008.8 197L1992.4 213.4" stroke="#1b4a8c" stroke-width="2.3"/><path d="M64.7 249.0V252.6M78.6 247.4V254.2M92.6 249.0V252.6M120.4 249.0V252.6M134.3 247.4V254.2M148.2 249.0V252.6M162.2 247.4V254.2M176.1 249.0V252.6M190.0 247.4V254.2M203.9 249.0V252.6M217.8 245.1V256.6M231.8 249.0V252.6M245.7 247.4V254.2M259.6 249.0V252.6M273.5 247.4V254.2M287.4 249.0V252.6M301.4 247.4V254.2M315.3 249.0V252.6M343.1 249.0V252.6M357.0 247.4V254.2M371.0 249.0V252.6M384.9 247.4V254.2M398.8 249.0V252.6M412.7 247.4V254.2M426.6 249.0V252.6M440.6 245.1V256.6M454.5 249.0V252.6M468.4 247.4V254.2M482.3 249.0V252.6M496.2 247.4V254.2M510.2 249.0V252.6M524.1 247.4V254.2M538.0 249.0V252.6M565.8 249.0V252.6M579.8 247.4V254.2M593.7 249.0V252.6M607.6 247.4V254.2M621.5 249.0V252.6M635.4 247.4V254.2M649.4 249.0V252.6M663.3 245.1V256.6M677.2 249.0V252.6M691.1 247.4V254.2M705.0 249.0V252.6M719.0 247.4V254.2M732.9 249.0V252.6M746.8 247.4V254.2M760.7 249.0V252.6M788.6 249.0V252.6M802.5 247.4V254.2M816.4 249.0V252.6M830.3 247.4V254.2M844.2 249.0V252.6M858.2 247.4V254.2M872.1 249.0V252.6M886.0 245.1V256.6M899.9 249.0V252.6M913.8 247.4V254.2M927.8 249.0V252.6M941.7 247.4V254.2M955.6 249.0V252.6M969.5 247.4V254.2M983.4 249.0V252.6M1011.3 249.0V252.6M1025.2 247.4V254.2M1039.1 249.0V252.6M1053.0 247.4V254.2M1067.0 249.0V252.6M1080.9 247.4V254.2M1094.8 249.0V252.6M1108.7 245.1V256.6M1122.6 249.0V252.6M1136.6 247.4V254.2M1150.5 249.0V252.6M1164.4 247.4V254.2M1178.3 249.0V252.6M1192.2 247.4V254.2M1206.2 249.0V252.6M1234.0 249.0V252.6M1247.9 247.4V254.2M1261.8 249.0V252.6M1275.8 247.4V254.2M1289.7 249.0V252.6M1303.6 247.4V254.2M1317.5 249.0V252.6M1331.4 245.1V256.6M1345.4 249.0V252.6M1359.3 247.4V254.2M1373.2 249.0V252.6M1387.1 247.4V254.2M1401.0 249.0V252.6M1415.0 247.4V254.2M1428.9 249.0V252.6M1456.7 249.0V252.6M1470.6 247.4V254.2M1484.6 249.0V252.6M1498.5 247.4V254.2M1512.4 249.0V252.6M1526.3 247.4V254.2M1540.2 249.0V252.6M1554.2 245.1V256.6M1568.1 249.0V252.6M1582.0 247.4V254.2M1595.9 249.0V252.6M1609.8 247.4V254.2M1623.8 249.0V252.6M1637.7 247.4V254.2M1651.6 249.0V252.6M1679.4 249.0V252.6M1693.4 247.4V254.2M1707.3 249.0V252.6M1721.2 247.4V254.2M1735.1 249.0V252.6M1749.0 247.4V254.2M1763.0 249.0V252.6M1776.9 245.1V256.6M1790.8 249.0V252.6M1804.7 247.4V254.2M1818.6 249.0V252.6M1832.6 247.4V254.2M1846.5 249.0V252.6M1860.4 247.4V254.2M1874.3 249.0V252.6M1902.2 249.0V252.6M1916.1 247.4V254.2M1930.0 249.0V252.6" stroke="#8e8e8e" stroke-width="1.2"/><path d="M440.6 260.6V265M437.0 265H444.2M551.9 260.6V265M548.3 265H555.5M663.3 260.6V265M659.7 265H666.9M774.6 260.6V265M771.0 265H778.2M886.0 260.6V265M882.4 265H889.6M997.4 260.6V265M993.8 265H1001.0M1108.7 260.6V265M1105.1 265H1112.3M1220.1 260.6V265M1216.5 265H1223.7M1331.4 260.6V265M1327.8 265H1335.0M1442.8 260.6V265M1439.2 265H1446.4M1554.2 260.6V265M1550.6 265H1557.8" stroke="#7a7a7a" stroke-width="1.2" fill="none"/><path d="M106.5 240V242M551.9 240V242M774.6 240V242M997.4 240V242M1220.1 240V242M1442.8 240V242M1665.5 240V242M1888.2 240V242" stroke="#8e8e8e" stroke-width="1.2"/><path d="M321.8 239.6H336.6L329.2 251L336.6 264.4H321.8L329.2 251Z" fill="#fdfdfd" stroke="#6f6f6f" stroke-width="1.3" stroke-linejoin="round"/><path d="M1665.7 251.6L1673.2 262V265.3H1658.2V262Z" fill="#fdfdfd" stroke="#6f6f6f" stroke-width="1.3" stroke-linejoin="round"/><path d="M15.6 248.2V255.4H23.8" fill="none" stroke="#4f4f4f" stroke-width="2.4"/><path d="M2052.8 195.2H2067.6M2052.8 199.8H2067.6M2052.8 204.3H2067.6" stroke="#444" stroke-width="1.3"/><rect x="2046.2" y="230.5" width="27.5" height="27.2" fill="#fafafa" stroke="#474747" stroke-width="1.5"/><rect x="2046.2" y="230.5" width="27.5" height="4.6" fill="#595959" stroke="#474747" stroke-width="1.2"/><path d="M2051.4 243.4H2068.8M2051.4 249.3H2068.8" stroke="#474747" stroke-width="1.2"/><circle cx="2062.2" cy="243.4" r="2.1" fill="#3b8dd4"/><circle cx="2057.8" cy="249.3" r="2.1" fill="#3b8dd4"/><path d="M2046.4 302.6L2054.5 281L2062.6 302.6M2049.3 295.4H2059.7" fill="none" stroke="#474747" stroke-width="2"/><g transform="translate(0,0)"><path d="M2074.8 290.2C2076.8 292 2070.8 300.3 2065.5 303.4L2062.5 301.2C2064.5 296.2 2072.8 288.4 2074.8 290.2Z" fill="#fff" stroke="#474747" stroke-width="1.2"/><path d="M2053.4 309.6C2053.8 305.6 2057.8 302.4 2062.2 302.2C2064.6 302.6 2065.8 304 2065.5 305.4C2064.5 309 2058.4 311.3 2053.4 309.6Z" fill="#5d9fe3" stroke="#2a6fc0" stroke-width="1.1"/><path d="M2056 308.2C2058.2 306.2 2061.2 305 2064.2 305" stroke="#cfe3f8" stroke-width=".9" fill="none"/></g><path d="M2044.8 356.5V332H2053.5L2057 335.8H2072.5V340H2048Z" fill="#fafafa" stroke="#ec8b35" stroke-width="1.4" stroke-linejoin="round"/><path d="M2044.9 356.6L2048.2 340.2H2076.6L2073 356.6Z" fill="#f8db8f" stroke="#ec8b35" stroke-width="1.4" stroke-linejoin="round"/><rect x="2056.6" y="342" width="17.2" height="16.8" fill="#fafafa" stroke="#474747" stroke-width="1.5"/><path d="M2057.4 358L2062.6 351.6L2064.6 353.6L2068.2 349.6L2073 354.4V358Z" fill="#83beec" stroke="#3b8dd4" stroke-width="1" stroke-linejoin="round"/><circle cx="2061" cy="346.4" r="1.7" fill="#f8cf86" stroke="#ec8b35" stroke-width=".9"/><circle cx="2060" cy="395.9" r="13.7" fill="#fafafa" stroke="#474747" stroke-width="1.4"/><path d="M2067 388.6L2063 398.6L2053 403.2L2057 393.2Z" fill="#3b8dd4"/><circle cx="2060" cy="395.9" r="1.8" fill="#fff"/><path d="M2049.2 433.4H2064.6L2071.0 439.79999999999995V461.0H2049.2Z" fill="#fafafa" stroke="#474747" stroke-width="1.5" stroke-linejoin="round"/><path d="M2064.6 433.4V439.79999999999995H2071.0" fill="none" stroke="#474747" stroke-width="1.5" stroke-linejoin="round"/><path d="M2046 492.4C2051 483.8 2063 483.8 2068.4 491.4" fill="none" stroke="#474747" stroke-width="1.4"/><circle cx="2057" cy="493.2" r="4.6" fill="#fafafa" stroke="#474747" stroke-width="1.4"/><circle cx="2057.3" cy="493" r="2.3" fill="#3b8dd4"/><g transform="translate(0,203)"><path d="M2074.8 290.2C2076.8 292 2070.8 300.3 2065.5 303.4L2062.5 301.2C2064.5 296.2 2072.8 288.4 2074.8 290.2Z" fill="#fff" stroke="#474747" stroke-width="1.2"/><path d="M2053.4 309.6C2053.8 305.6 2057.8 302.4 2062.2 302.2C2064.6 302.6 2065.8 304 2065.5 305.4C2064.5 309 2058.4 311.3 2053.4 309.6Z" fill="#5d9fe3" stroke="#2a6fc0" stroke-width="1.1"/><path d="M2056 308.2C2058.2 306.2 2061.2 305 2064.2 305" stroke="#cfe3f8" stroke-width=".9" fill="none"/></g><path d="M2049.2 535H2064.6L2071.0 541.4V562.6H2049.2Z" fill="#fafafa" stroke="#474747" stroke-width="1.5" stroke-linejoin="round"/><path d="M2064.6 535V541.4H2071.0" fill="none" stroke="#474747" stroke-width="1.5" stroke-linejoin="round"/><path d="M2053.6 540.3H2059.6M2053.6 545.8H2056.6M2053.6 554.6H2058.4M2060.2 554.6H2062.6" stroke="#6a6a6a" stroke-width="1.3"/><path d="M2060.8 545.8H2067M2053.6 550.2H2062.6M2053.6 558.9H2056.2" stroke="#ec8b35" stroke-width="1.3"/><path d="M2071.6 546.6l5.2 5.2l-12.6 12.6l-6.6 1.5l1.5 -6.6Z" fill="#5d9fe3" stroke="#f0f0f0" stroke-width="3.2" stroke-linejoin="round"/><path d="M2071.6 546.6l5.2 5.2l-12.6 12.6l-6.6 1.5l1.5 -6.6Z" fill="#5d9fe3" stroke="#2a6fc0" stroke-width="1" stroke-linejoin="round"/><path d="M2049.2 585.8H2064.6L2071.0 592.1999999999999V613.4H2049.2Z" fill="#fafafa" stroke="#474747" stroke-width="1.5" stroke-linejoin="round"/><path d="M2064.6 585.8V592.1999999999999H2071.0" fill="none" stroke="#474747" stroke-width="1.5" stroke-linejoin="round"/><rect x="2056" y="594.6" width="21.6" height="22.6" fill="#f0f0f0"/><path d="M2049.2 612.4V613.4H2056.6" stroke="#474747" stroke-width="1.5" fill="none"/><circle cx="2066.7" cy="598.6" r="2.4" fill="none" stroke="#2a6fc0" stroke-width="1.5"/><path d="M2058.2 603.2H2075.3V606.2H2070.3V616H2067.8V610.2H2065.6V616H2063.1V606.2H2058.2Z" fill="#f6f9fd" stroke="#2a6fc0" stroke-width="1.4" stroke-linejoin="round"/><g fill="none" stroke="#8f8f8f" stroke-width="1.3"><path d="M16.6 1207.6H35.8L38 1209.8V1229H16.6Z"/><path d="M21 1207.6V1215.6H33.6V1207.6M20.6 1229V1220.4H34V1229"/><rect x="23.4" y="1222.6" width="3" height="4.6"/></g><rect x="1414" y="1213.4" width="23.6" height="12.8" fill="none" stroke="#3f8fdb" stroke-width="1.5"/><path d="M1448.6 1208.6V1230.8M1444 1208.4H1453.2M1444 1231H1453.2" stroke="#3d3d3d" stroke-width="1.5" fill="none"/><path d="M1698.6 1208.8H1709L1715 1214.8V1231H1698.6Z" fill="#2165b8" stroke="#2165b8" stroke-width="1.2" stroke-linejoin="round"/><path d="M1709.6 1209.4V1214.4H1714.4Z" fill="#8db8ea"/><path d="M1724 1209.4H1735.1L1740.6 1214.9V1230.6H1724ZM1735.1 1209.4V1214.9H1740.6M1743.4 1209.4H1754.5L1760.0 1214.9V1230.6H1743.4ZM1754.5 1209.4V1214.9H1760.0M1786.0 1209.4H1775.1L1769.6 1214.9V1230.6H1786.0ZM1775.1 1209.4V1214.9H1769.6M1786 1209.4H1796.9L1802.4 1214.9V1230.6H1786ZM1796.9 1209.4V1214.9H1802.4" fill="#f8f8f8" stroke="#4a4a4a" stroke-width="1.4" stroke-linejoin="round"/><path d="M1826.6 1220H1840.7" stroke="#222" stroke-width="2.4"/><path d="M1848.6 1220.7H1990" stroke="#7c7c7c" stroke-width="1.6"/><path d="M1881.3 1216.6V1224.8M1917.8 1216.6V1224.8" stroke="#7c7c7c" stroke-width="2"/><rect x="1924.2" y="1213.4" width="4.8" height="13.4" rx="1" fill="#d9d9d9" stroke="#6a6a6a" stroke-width="1.1"/><path d="M1997.6 1220H2012M2004.8 1212.8V1227.2" stroke="#222" stroke-width="2.4"/><defs>
<linearGradient id="w1" x1="0" y1="0" x2="1" y2="1"><stop offset="0" stop-color="#63d0f8"/><stop offset="1" stop-color="#1b6fd2"/></linearGradient>
<linearGradient id="fy" x1="0" y1="0" x2="0" y2="1"><stop offset="0" stop-color="#ffd96a"/><stop offset="1" stop-color="#f7bf2c"/></linearGradient>
<linearGradient id="cob" x1="0" y1="1" x2="1" y2="0"><stop offset="0" stop-color="#e8a818"/><stop offset=".5" stop-color="#f8cf3a"/><stop offset="1" stop-color="#e0a010"/></linearGradient>
<linearGradient id="lf" x1="0" y1="0" x2="1" y2="1"><stop offset="0" stop-color="#8dbb5e"/><stop offset="1" stop-color="#3f7d2c"/></linearGradient>
<linearGradient id="cp1" x1="0" y1="0" x2="0" y2="1"><stop offset="0" stop-color="#2f7de0"/><stop offset=".55" stop-color="#3bb5b0"/><stop offset="1" stop-color="#c8c838"/></linearGradient>
<linearGradient id="cp2" x1="0" y1="0" x2="0" y2="1"><stop offset="0" stop-color="#9a5be8"/><stop offset=".6" stop-color="#e255a8"/><stop offset="1" stop-color="#f59a5a"/></linearGradient>
<linearGradient id="ed1" x1="0" y1="0" x2="1" y2="1"><stop offset="0" stop-color="#35a0e8"/><stop offset="1" stop-color="#1a5fb4"/></linearGradient>
<linearGradient id="ed2" x1="0" y1="1" x2="1" y2="0"><stop offset="0" stop-color="#3fb3df"/><stop offset=".6" stop-color="#52c8b4"/><stop offset="1" stop-color="#7fdc58"/></linearGradient>
<linearGradient id="st" x1="0" y1="0" x2="0" y2="1"><stop offset="0" stop-color="#2f73c4"/><stop offset="1" stop-color="#1e4f94"/></linearGradient>
<linearGradient id="lw" x1="0" y1="0" x2="0" y2="1"><stop offset="0" stop-color="#3f98e4"/><stop offset="1" stop-color="#1a5fc4"/></linearGradient>
</defs><g fill="url(#w1)"><rect x="674.8" y="1253" width="16.2" height="16.2" rx="1"/><rect x="692.8" y="1253" width="16.2" height="16.2" rx="1" fill="#3f9ee8"/><rect x="674.8" y="1271" width="16.2" height="16.2" rx="1" fill="#2f8ae0"/><rect x="692.8" y="1271" width="16.2" height="16.2" rx="1" fill="#1f72d4"/></g><rect x="729" y="1246.3" width="316" height="45.4" rx="22.7" fill="#fafafa" stroke="#e0e0e0" stroke-width="1"/><path d="M752 1292.2H1022" stroke="#d0d0d0" stroke-width="1"/><circle cx="753.2" cy="1267.4" r="7.4" fill="none" stroke="#1c1c1c" stroke-width="2.1"/><path d="M758.6 1273.2L764.8 1279.8" stroke="#1c1c1c" stroke-width="2.4" stroke-linecap="round"/><g><path d="M977 1254.5C983 1262 986 1270 985 1281C990 1271 990 1262 984 1253.5C986 1260 985 1263 983.5 1262Z" fill="#5a9a44"/><path d="M981 1256C986 1262 990 1268 989 1277L993 1270C992 1263 988 1258 981 1256Z" fill="#86b85a"/><path d="M982.5 1283.8C984 1279 988 1274.5 992 1272L1028 1277C1020 1282 1004 1281 994 1280C990 1281 986 1283 982.5 1283.8Z" fill="url(#lf)"/><path d="M1000 1280C1010 1281 1022 1284 1029.5 1283.8C1024 1279.5 1014 1276.5 1006 1276.5Z" fill="#4a8a38"/><ellipse cx="1007.6" cy="1265.6" rx="19.6" ry="7.6" transform="rotate(-30 1007.6 1265.6)" fill="url(#cob)"/><path d="M998 1266l1.6 -1M1002 1263.6l1.6 -1M1006 1261.2l1.6 -1M1010 1258.8l1.6 -1M1001 1270l1.6 -1M1005 1267.6l1.6 -1M1009 1265.2l1.6 -1M1013 1262.8l1.6 -1" stroke="#fff3b8" stroke-width="1.6" stroke-linecap="round"/><path d="M983 1283.5C984 1276 990 1266 1001 1258.5C994 1266 991.5 1272 992.5 1277.5C1000 1279.5 1012 1275 1024 1263.5C1020 1273 1006 1281.5 994.5 1281C990 1281 986 1283.5 983 1283.5Z" fill="#6aa64a"/><path d="M981.6 1283.6L985 1279.2L987.4 1281.8Z" fill="#9cc070"/></g><path d="M1078 1254.4H1089.5C1092.5 1254.4 1093.8 1256.4 1093 1259L1088.6 1272.4C1087.6 1275.4 1085.6 1276.6 1082.6 1276.6H1071C1067 1276.6 1065 1274 1066.2 1270.2L1069.8 1259.6C1071 1256 1073.6 1254.4 1078 1254.4Z" fill="url(#cp1)"/><path d="M1086.5 1262H1094C1097.6 1262 1099 1264 1097.8 1267.4L1095.4 1274.4C1094.4 1277.4 1092.4 1278.6 1089.4 1278.6H1079C1081.6 1278.2 1083 1276.4 1083.8 1274Z" fill="url(#cp2)"/><path d="M1082.4 1263.2L1086.6 1261.8L1082.8 1274.2L1079.4 1276Z" fill="#fff" opacity=".9"/><rect x="1072.5" y="1276.2" width="26.6" height="10.3" rx="2.4" fill="#f8c81e"/><path d="M1127.6 1256C1127.6 1254.4 1128.6 1253.4 1130.2 1253.4H1138.6C1140 1253.4 1140.8 1254 1141.6 1255L1143.4 1257.6H1127.6Z" fill="#e2a414"/><rect x="1127.6" y="1257" width="34.8" height="27" rx="1.6" fill="url(#fy)"/><path d="M1133.8 1284V1277.4C1133.8 1275.6 1135 1274.6 1136.8 1274.6H1152.4C1154.2 1274.6 1155.4 1275.6 1155.4 1277.4V1284Z" fill="#2b83d3"/><path d="M1138 1279.6H1151" stroke="#1f6fc0" stroke-width="2"/><circle cx="1208.8" cy="1269.2" r="17.5" fill="url(#ed1)"/><path d="M1191.6 1266C1192.6 1257.6 1200 1251.7 1208.8 1251.7C1219 1251.7 1226.3 1259 1226.3 1267.8C1226.3 1273.6 1222.4 1277.2 1217.4 1277.2C1213.6 1277.2 1211.6 1275.4 1211.6 1273.4C1211.6 1271.6 1213 1271 1213 1268.6C1213 1265.4 1209.8 1262.6 1205.8 1262.6C1199.6 1262.6 1195 1267.6 1194.6 1273.4C1192.4 1271 1191.2 1268.4 1191.6 1266Z" fill="url(#ed2)"/><path d="M1194.6 1273.4C1195 1267.6 1199.6 1262.6 1205.8 1262.6C1202 1265.2 1200.8 1270.4 1203.2 1275C1206.4 1281 1213.6 1283.2 1220 1281C1221.8 1280.4 1223.2 1279.4 1224.2 1278.4C1220.4 1284.4 1213.2 1287.8 1206 1286.5C1199 1285.2 1194.4 1279.8 1194.6 1273.4Z" fill="#1a52a4"/><path d="M1207.8 1267.5C1204.6 1266.8 1203.6 1272.2 1207.7 1275.2C1212.3 1278.3 1220.4 1277.8 1223.3 1273.4C1219.1 1276 1212.5 1275.2 1211.9 1271.5C1211.5 1268.9 1210 1267.5 1207.8 1267.5Z" fill="#fff"/><rect x="1204" y="1293.2" width="9" height="3.2" rx="1.6" fill="#8a8a8a"/><path d="M1262.6 1261.4V1257C1262.6 1254.6 1264 1253.4 1266.4 1253.4H1277.2C1279.6 1253.4 1281 1254.6 1281 1257V1261.4" fill="none" stroke="#48b2f0" stroke-width="2.6"/><path d="M1255 1260.4C1255 1258.8 1256 1258 1257.6 1258H1286C1287.6 1258 1288.6 1258.8 1288.6 1260.4V1281.4C1288.6 1284.8 1286.6 1286.6 1283.2 1286.6H1260.4C1257 1286.6 1255 1284.8 1255 1281.4Z" fill="url(#st)"/><rect x="1265.4" y="1265.2" width="5.8" height="5.8" fill="#f25022"/><rect x="1272.4" y="1265.2" width="5.8" height="5.8" fill="#7fba00"/><rect x="1265.4" y="1272.2" width="5.8" height="5.8" fill="#31a8f0"/><rect x="1272.4" y="1272.2" width="5.8" height="5.8" fill="#ffb900"/><rect x="1319" y="1256" width="35" height="26.2" rx="2.2" fill="#363636"/><path d="M1319 1258.2Q1319 1256 1321.2 1256H1351.8Q1354 1256 1354 1258.2V1260.4H1319Z" fill="#5a5a5a"/><rect x="1319.6" y="1256.4" width="11" height="4" fill="#c8c8c8"/><rect x="1331.4" y="1256.4" width="11" height="4" fill="#8f8f8f"/><path d="M1323.6 1264.6L1329.8 1270.2L1323.6 1275.8" fill="none" stroke="#fff" stroke-width="2.6"/><path d="M1334 1276.4H1345.6" stroke="#fff" stroke-width="2.4"/><rect x="1332" y="1293.2" width="9" height="3.2" rx="1.6" fill="#8a8a8a"/><rect x="1372.8" y="1242.6" width="55" height="54.4" rx="6" fill="#f9f9f9" stroke="#e6e6e6" stroke-width="1"/><path d="M1389 1251.8H1404L1414.2 1262V1282.6Q1414.2 1286.6 1410.2 1286.6H1389.6Q1385.6 1286.6 1385.6 1282.6V1255.2Q1385.6 1251.8 1389 1251.8Z" fill="url(#lw)"/><path d="M1404 1251.8H1414.2V1262Z" fill="#7fd0f8"/><path d="M1404 1251.8L1414.2 1262H1408Q1404 1262 1404 1258Z" fill="#1a5cb8" opacity=".55"/><path d="M1391.6 1265H1397.6M1391.6 1268.4H1397.6M1391.6 1273.2H1408.6M1391.6 1276.6H1408.6M1391.6 1280.4H1398.6" stroke="#e8f2fc" stroke-width="1.5"/><rect x="1400.4" y="1263.8" width="8" height="5.8" fill="none" stroke="#e8f2fc" stroke-width="1.3"/><rect x="1389" y="1292.4" width="23" height="4.2" rx="2.1" fill="#2a74d8"/><path d="M1776 1272.6L1783.2 1265.4L1790.4 1272.6" fill="none" stroke="#1c1c1c" stroke-width="1.7"/><path d="M1823.6 1277.6C1819.8 1277.6 1818 1275 1818.4 1272.2C1818.8 1269.6 1821 1268.4 1822.8 1268.4C1823.6 1264.4 1826.8 1262.4 1830 1262.4C1833.6 1262.4 1836 1264.4 1836.8 1267.2C1839.6 1267.4 1841.2 1269.6 1841.2 1272.2C1841.2 1275.4 1839 1277.6 1836 1277.6Z" fill="#b4b4b4" stroke="#2a2a2a" stroke-width="1.5"/><path d="M1820.6 1261.2L1839.6 1279.2" stroke="#eee" stroke-width="4"/><path d="M1820.6 1261.2L1839.6 1279.2" stroke="#2a2a2a" stroke-width="1.6"/><path d="M1865.2 1259H1880.6M1883.6 1267V1276.6H1865.2V1259M1871 1280.2H1880M1873 1276.6V1280.2M1878 1276.6V1280.2" fill="none" stroke="#2a2a2a" stroke-width="1.5"/><rect x="1881.4" y="1258.2" width="5.6" height="9.6" rx="1.4" fill="#eee" stroke="#2a2a2a" stroke-width="1.4"/><path d="M1882.6 1261.4H1885.8M1884.2 1267.8V1280.6" stroke="#2a2a2a" stroke-width="1.4"/><path d="M1902.4 1266.2H1905.8L1910.6 1261.8V1272" fill="none" stroke="#2a2a2a" stroke-width="1.5" stroke-linejoin="round"/><path d="M1902.4 1266.2V1271.2H1905.8L1908 1273" fill="none" stroke="#2a2a2a" stroke-width="1.5" stroke-linejoin="round"/><circle cx="1916" cy="1274.2" r="6" fill="#242424"/><path d="M1913.4 1271.6L1918.6 1276.8M1918.6 1271.6L1913.4 1276.8" stroke="#fff" stroke-width="1.5"/><path d="M2040 1277.4C2040 1276.6 2041.6 1275.6 2041.6 1273.6V1267.6C2041.6 1262.6 2044.6 1259.2 2048.4 1259.2C2052.2 1259.2 2055.2 1262.6 2055.2 1267.6V1273.6C2055.2 1275.6 2056.8 1276.6 2056.8 1277.4Z" fill="#1847a6" stroke="#1847a6" stroke-width="1.4" stroke-linejoin="round"/><path d="M2045.4 1279.2A3.1 2.2 0 0 0 2051.4 1279.2Z" fill="#1847a6"/></svg>
<span class="t" style="left:36.10px;top:6.00px;font:normal normal 18px/20px 'Liberation Sans';color:#111;transform:scaleX(0.9803);">sample-recruitment-phone-script.odt — LibreOffice Writer</span>
<span class="t" style="left:12.09px;top:40.00px;font:normal normal 18px/20px 'Liberation Sans';color:#1b1b1b;transform:scaleX(0.9145);">File</span>
<span class="t" style="left:60.83px;top:40.00px;font:normal normal 18px/20px 'Liberation Sans';color:#1b1b1b;transform:scaleX(0.9728);">Edit</span>
<span class="t" style="left:114.20px;top:40.00px;font:normal normal 18px/20px 'Liberation Sans';color:#1b1b1b;transform:scaleX(0.8919);">View</span>
<span class="t" style="left:172.75px;top:40.00px;font:normal normal 18px/20px 'Liberation Sans';color:#1b1b1b;transform:scaleX(0.9519);">Insert</span>
<span class="t" style="left:238.36px;top:40.00px;font:normal normal 18px/20px 'Liberation Sans';color:#1b1b1b;transform:scaleX(0.9446);">Format</span>
<span class="t" style="left:315.30px;top:40.00px;font:normal normal 18px/20px 'Liberation Sans';color:#1b1b1b;transform:scaleX(0.8915);">Styles</span>
<span class="t" style="left:382.60px;top:40.00px;font:normal normal 18px/20px 'Liberation Sans';color:#1b1b1b;transform:scaleX(0.8996);">Table</span>
<span class="t" style="left:444.55px;top:40.00px;font:normal normal 18px/20px 'Liberation Sans';color:#1b1b1b;transform:scaleX(0.9525);">Form</span>
<span class="t" style="left:507.50px;top:40.00px;font:normal normal 18px/20px 'Liberation Sans';color:#1b1b1b;transform:scaleX(0.9162);">Tools</span>
<span class="t" style="left:570.00px;top:40.00px;font:normal normal 18px/20px 'Liberation Sans';color:#1b1b1b;transform:scaleX(0.9689);">Window</span>
<span class="t" style="left:655.50px;top:40.00px;font:normal normal 18px/20px 'Liberation Sans';color:#1b1b1b;transform:scaleX(0.9998);">Help</span>
<span class="t" style="left:10.77px;top:141.40px;font:normal normal 18px/20px 'Liberation Sans';color:#1b1b1b;transform:scaleX(0.9285);">Default Paragraph Style</span>
<span class="t" style="left:362.00px;top:141.40px;font:normal normal 18px/20px 'Liberation Sans';color:#1b1b1b;transform:scaleX(0.8956);">Cambria</span>
<span class="t" style="left:641.56px;top:141.40px;font:normal normal 18px/20px 'Liberation Sans';color:#1b1b1b;transform:scaleX(0.9351);">12 pt</span>
<span class="t" style="left:61.60px;top:197.50px;font:normal normal 18px/20px 'Liberation Sans';color:#1a1a1a;transform:scaleX(0.9547);">You are running version 24.2 of LibreOffice for the first time. Do you want to learn what's new?</span>
<span class="t" style="left:1855.50px;top:197.80px;font:normal normal 18px/20px 'Liberation Sans';color:#1a1a1a;transform:scaleX(0.8969);">Release Notes</span>
<span class="t" style="left:59.49px;top:1211.00px;font:normal normal 18px/20px 'Liberation Sans';color:#1b1b1b;transform:scaleX(0.9136);">Page 1 of 2</span>
<span class="t" style="left:307.00px;top:1211.00px;font:normal normal 18px/20px 'Liberation Sans';color:#1b1b1b;transform:scaleX(0.9114);">642 words, 3,554 characters</span>
<span class="t" style="left:744.58px;top:1211.00px;font:normal normal 18px/20px 'Liberation Sans';color:#1b1b1b;transform:scaleX(0.9151);">Default Page Style</span>
<span class="t" style="left:1114.09px;top:1211.00px;font:normal normal 18px/20px 'Liberation Sans';color:#1b1b1b;transform:scaleX(0.9150);">English (USA)</span>
<span class="t" style="left:2034.15px;top:1211.00px;font:normal normal 18px/20px 'Liberation Sans';color:#1b1b1b;transform:scaleX(0.8527);">160%</span>
<span class="t" style="left:781.60px;top:1258.40px;font:normal normal 19.5px/22px 'Liberation Sans';color:#606060;transform:scaleX(0.9550);">Search</span>
<span class="t" style="left:1951.95px;top:1248.40px;font:normal normal 16.6px/19px 'Liberation Sans';color:#1c1c1c;transform:scaleX(1.0549);">12:45 AM</span>
<span class="t" style="left:1946.50px;top:1271.30px;font:normal normal 16.6px/19px 'Liberation Sans';color:#1c1c1c;transform:scaleX(1.0803);">8/14/2024</span>
<span class="t" style="left:711.29px;top:319.20px;font:normal bold 35.5px/40px 'Liberation Serif';color:#000;transform:scaleX(1.1069);">Sample</span>
<span class="t" style="left:847.40px;top:319.20px;font:normal bold 35.5px/40px 'Liberation Serif';color:#000;transform:scaleX(1.1071);">Recruitment</span>
<span class="t" style="left:1070.20px;top:319.20px;font:normal bold 35.5px/40px 'Liberation Serif';color:#000;transform:scaleX(1.1211);">Phone</span>
<span class="t" style="left:1185.92px;top:319.20px;font:normal bold 35.5px/40px 'Liberation Serif';color:#000;transform:scaleX(1.0755);">Script</span>
<span class="t" style="left:331.74px;top:406.00px;font:normal normal 35.5px/40px 'Liberation Serif';color:#000;transform:scaleX(1.0592);-webkit-text-stroke:0.3px #000;">Below</span>
<span class="t" style="left:438.70px;top:406.00px;font:normal normal 35.5px/40px 'Liberation Serif';color:#000;transform:scaleX(1.0235);-webkit-text-stroke:0.3px #000;">is</span>
<span class="t" style="left:471.00px;top:406.00px;font:normal normal 35.5px/40px 'Liberation Serif';color:#000;transform:scaleX(1.1000);-webkit-text-stroke:0.3px #000;">a</span>
<span class="t" style="left:498.37px;top:406.00px;font:normal normal 35.5px/40px 'Liberation Serif';color:#000;transform:scaleX(1.1296);-webkit-text-stroke:0.3px #000;">sample</span>
<span class="t" style="left:621.00px;top:406.00px;font:normal normal 35.5px/40px 'Liberation Serif';color:#000;transform:scaleX(1.1517);-webkit-text-stroke:0.3px #000;">recruitment</span>
<span class="t" style="left:820.50px;top:406.00px;font:normal normal 35.5px/40px 'Liberation Serif';color:#000;transform:scaleX(1.1233);-webkit-text-stroke:0.3px #000;">phone</span>
<span class="t" style="left:926.85px;top:406.00px;font:normal normal 35.5px/40px 'Liberation Serif';color:#000;transform:scaleX(1.1537);-webkit-text-stroke:0.3px #000;">script</span>
<span class="t" style="left:1028.90px;top:406.00px;font:normal normal 35.5px/40px 'Liberation Serif';color:#000;transform:scaleX(1.1092);-webkit-text-stroke:0.3px #000;">that</span>
<span class="t" style="left:1099.00px;top:406.00px;font:normal normal 35.5px/40px 'Liberation Serif';color:#000;transform:scaleX(1.1178);-webkit-text-stroke:0.3px #000;">was</span>
<span class="t" style="left:1170.70px;top:406.00px;font:normal normal 35.5px/40px 'Liberation Serif';color:#000;transform:scaleX(1.0961);-webkit-text-stroke:0.3px #000;">used</span>
<span class="t" style="left:1252.12px;top:406.00px;font:normal normal 35.5px/40px 'Liberation Serif';color:#000;transform:scaleX(1.0771);-webkit-text-stroke:0.3px #000;">for</span>
<span class="t" style="left:1306.76px;top:406.00px;font:normal normal 35.5px/40px 'Liberation Serif';color:#000;transform:scaleX(1.0400);-webkit-text-stroke:0.3px #000;">a</span>
<span class="t" style="left:1334.30px;top:406.00px;font:normal normal 35.5px/40px 'Liberation Serif';color:#000;transform:scaleX(1.1100);-webkit-text-stroke:0.3px #000;">real</span>
<span class="t" style="left:1402.63px;top:406.00px;font:normal normal 35.5px/40px 'Liberation Serif';color:#000;transform:scaleX(1.1746);-webkit-text-stroke:0.3px #000;">study.</span>
<span class="t" style="left:1508.80px;top:406.00px;font:normal normal 35.5px/40px 'Liberation Serif';color:#000;transform:scaleX(1.0517);-webkit-text-stroke:0.3px #000;">We’ve</span>
<span class="t" style="left:332.80px;top:449.20px;font:normal normal 35.5px/40px 'Liberation Serif';color:#000;transform:scaleX(1.0970);-webkit-text-stroke:0.3px #000;">provided</span>
<span class="t" style="left:483.30px;top:449.20px;font:normal normal 35.5px/40px 'Liberation Serif';color:#000;transform:scaleX(1.1233);-webkit-text-stroke:0.3px #000;">this</span>
<span class="t" style="left:549.76px;top:449.20px;font:normal normal 35.5px/40px 'Liberation Serif';color:#000;transform:scaleX(1.1384);-webkit-text-stroke:0.3px #000;">script</span>
<span class="t" style="left:649.48px;top:449.20px;font:normal normal 35.5px/40px 'Liberation Serif';color:#000;transform:scaleX(1.1241);-webkit-text-stroke:0.3px #000;">as</span>
<span class="t" style="left:691.66px;top:449.20px;font:normal normal 35.5px/40px 'Liberation Serif';color:#000;transform:scaleX(1.0400);-webkit-text-stroke:0.3px #000;">a</span>
<span class="t" style="left:718.11px;top:449.20px;font:normal normal 35.5px/40px 'Liberation Serif';color:#000;transform:scaleX(1.0906);-webkit-text-stroke:0.3px #000;">guide</span>
<span class="t" style="left:813.77px;top:449.20px;font:normal normal 35.5px/40px 'Liberation Serif';color:#000;transform:scaleX(1.1331);-webkit-text-stroke:0.3px #000;">only.</span>
<span class="t" style="left:900.94px;top:449.20px;font:italic bold 35.5px/40px 'Liberation Serif';color:#000;transform:scaleX(0.9391);">If</span>
<span class="t" style="left:933.67px;top:449.20px;font:italic bold 35.5px/40px 'Liberation Serif';color:#000;transform:scaleX(1.0424);">you</span>
<span class="t" style="left:1000.80px;top:449.20px;font:italic bold 35.5px/40px 'Liberation Serif';color:#000;transform:scaleX(1.1090);">choose</span>
<span class="t" style="left:1121.20px;top:449.20px;font:italic bold 35.5px/40px 'Liberation Serif';color:#000;transform:scaleX(1.2025);">to</span>
<span class="t" style="left:1163.25px;top:449.20px;font:italic bold 35.5px/40px 'Liberation Serif';color:#000;transform:scaleX(1.1481);">use</span>
<span class="t" style="left:1229.90px;top:449.20px;font:italic bold 35.5px/40px 'Liberation Serif';color:#000;transform:scaleX(1.1506);">it,</span>
<span class="t" style="left:1269.22px;top:449.20px;font:italic bold 35.5px/40px 'Liberation Serif';color:#000;transform:scaleX(1.1822);">tailor</span>
<span class="t" style="left:1372.05px;top:449.20px;font:italic bold 35.5px/40px 'Liberation Serif';color:#000;transform:scaleX(1.1502);">this</span>
<span class="t" style="left:1444.43px;top:449.20px;font:italic bold 35.5px/40px 'Liberation Serif';color:#000;transform:scaleX(1.1265);">script</span>
<span class="t" style="left:1544.60px;top:449.20px;font:italic bold 35.5px/40px 'Liberation Serif';color:#000;transform:scaleX(1.1532);">for</span>
<span class="t" style="left:334.06px;top:492.70px;font:italic bold 35.5px/40px 'Liberation Serif';color:#000;transform:scaleX(1.0907);">your</span>
<span class="t" style="left:416.57px;top:492.70px;font:italic bold 35.5px/40px 'Liberation Serif';color:#000;transform:scaleX(1.1733);">study.</span>
<span class="t" style="left:524.40px;top:492.70px;font:normal normal 35.5px/40px 'Liberation Serif';color:#000;transform:scaleX(1.0321);-webkit-text-stroke:0.3px #000;">Visit</span>
<span class="t" style="left:603.41px;top:492.70px;font:normal normal 35.5px/40px 'Liberation Serif';color:#000;transform:scaleX(1.0925);-webkit-text-stroke:0.3px #000;">our</span>
<span class="t" style="left:666.20px;top:492.70px;font:normal normal 35.5px/40px 'Liberation Serif';color:#000;transform:scaleX(1.1432);-webkit-text-stroke:0.3px #000;">website</span>
<span class="t" style="left:799.10px;top:492.70px;font:normal normal 35.5px/40px 'Liberation Serif';color:#000;transform:scaleX(1.0993);-webkit-text-stroke:0.3px #000;">for</span>
<span class="t" style="left:854.80px;top:492.70px;font:normal normal 35.5px/40px 'Liberation Serif';color:#000;transform:scaleX(1.2510);-webkit-text-stroke:0.3px #000;">more</span>
<span class="t" style="left:956.00px;top:492.70px;font:normal normal 35.5px/40px 'Liberation Serif';color:#000;transform:scaleX(1.0563);-webkit-text-stroke:0.3px #000;">information</span>
<span class="t" style="left:1143.70px;top:492.70px;font:normal normal 35.5px/40px 'Liberation Serif';color:#000;transform:scaleX(1.1022);-webkit-text-stroke:0.3px #000;">on</span>
<span class="t" style="left:1194.00px;top:492.70px;font:normal normal 35.5px/40px 'Liberation Serif';color:#0000ff;transform:scaleX(1.1517);-webkit-text-stroke:0.3px #0000ff;">recruitment</span>
<span class="t" style="left:1393.50px;top:492.70px;font:normal normal 35.5px/40px 'Liberation Serif';color:#0000ff;transform:scaleX(1.1277);-webkit-text-stroke:0.3px #0000ff;">materials</span>
<span class="t" style="left:1539.44px;top:492.70px;font:normal normal 35.5px/40px 'Liberation Serif';color:#000;transform:scaleX(1.1800);-webkit-text-stroke:0.3px #000;">.</span>
<span class="t" style="left:330.12px;top:621.20px;font:normal bold 35.5px/40px 'Liberation Serif';color:#000;transform:scaleX(1.0835);">Study</span>
<span class="t" style="left:436.20px;top:621.20px;font:normal bold 35.5px/40px 'Liberation Serif';color:#000;transform:scaleX(1.1265);">Team:</span>
<span class="t" style="left:550.59px;top:621.20px;font:normal normal 35.5px/40px 'Liberation Serif';color:#000;transform:scaleX(1.0085);-webkit-text-stroke:0.3px #000;">Good</span>
<span class="t" style="left:641.07px;top:621.20px;font:normal normal 35.5px/40px 'Liberation Serif';color:#000;transform:scaleX(1.1343);-webkit-text-stroke:0.3px #000;">afternoon,</span>
<span class="t" style="left:814.90px;top:621.20px;font:normal normal 35.5px/40px 'Liberation Serif';color:#000;transform:scaleX(1.0298);-webkit-text-stroke:0.3px #000;">may</span>
<span class="t" style="left:888.83px;top:621.20px;font:normal normal 35.5px/40px 'Liberation Serif';color:#000;transform:scaleX(0.8700);-webkit-text-stroke:0.3px #000;">I</span>
<span class="t" style="left:910.80px;top:621.20px;font:normal normal 35.5px/40px 'Liberation Serif';color:#000;transform:scaleX(1.1121);-webkit-text-stroke:0.3px #000;">please</span>
<span class="t" style="left:1018.37px;top:621.20px;font:normal normal 35.5px/40px 'Liberation Serif';color:#000;transform:scaleX(1.1289);-webkit-text-stroke:0.3px #000;">speak</span>
<span class="t" style="left:1121.40px;top:621.20px;font:normal normal 35.5px/40px 'Liberation Serif';color:#000;transform:scaleX(1.0732);-webkit-text-stroke:0.3px #000;">with</span>
<span class="t" style="left:1200.37px;top:621.20px;font:normal normal 35.5px/40px 'Liberation Serif';color:#000;transform:scaleX(1.0667);-webkit-text-stroke:0.3px #000;">[</span>
<span class="t" style="left:1213.18px;top:621.20px;font:italic normal 35.5px/40px 'Liberation Serif';color:#000;transform:scaleX(1.1193);-webkit-text-stroke:0.3px #000;">name</span>
<span class="t" style="left:1299.00px;top:621.20px;font:normal normal 35.5px/40px 'Liberation Serif';color:#000;transform:scaleX(1.0030);-webkit-text-stroke:0.3px #000;">]?</span>
<span class="t" style="left:332.94px;top:708.80px;font:italic normal 35.5px/40px 'Liberation Serif';color:#000;transform:scaleX(1.0439);-webkit-text-stroke:0.3px #000;">If</span>
<span class="t" style="left:361.91px;top:708.80px;font:italic normal 35.5px/40px 'Liberation Serif';color:#000;transform:scaleX(1.0934);-webkit-text-stroke:0.3px #000;">the</span>
<span class="t" style="left:421.01px;top:708.80px;font:italic normal 35.5px/40px 'Liberation Serif';color:#000;transform:scaleX(1.0107);-webkit-text-stroke:0.3px #000;">Person</span>
<span class="t" style="left:533.43px;top:708.80px;font:italic normal 35.5px/40px 'Liberation Serif';color:#000;transform:scaleX(0.9697);-webkit-text-stroke:0.3px #000;">is</span>
<span class="t" style="left:566.45px;top:708.80px;font:italic normal 35.5px/40px 'Liberation Serif';color:#000;transform:scaleX(1.0527);-webkit-text-stroke:0.3px #000;">not</span>
<span class="t" style="left:624.65px;top:708.80px;font:italic normal 35.5px/40px 'Liberation Serif';color:#000;transform:scaleX(1.0538);-webkit-text-stroke:0.3px #000;">available:</span>
<span class="t" style="left:784.04px;top:708.80px;font:italic normal 35.5px/40px 'Liberation Serif';color:#000;transform:scaleX(1.0796);-webkit-text-stroke:0.3px #000;">Thank</span>
<span class="t" style="left:891.71px;top:708.80px;font:italic normal 35.5px/40px 'Liberation Serif';color:#000;transform:scaleX(1.0934);-webkit-text-stroke:0.3px #000;">the</span>
<span class="t" style="left:951.46px;top:708.80px;font:italic normal 35.5px/40px 'Liberation Serif';color:#000;transform:scaleX(1.0517);-webkit-text-stroke:0.3px #000;">person</span>
<span class="t" style="left:1063.20px;top:708.80px;font:italic normal 35.5px/40px 'Liberation Serif';color:#000;transform:scaleX(1.0663);-webkit-text-stroke:0.3px #000;">who</span>
<span class="t" style="left:1135.31px;top:708.80px;font:italic normal 35.5px/40px 'Liberation Serif';color:#000;transform:scaleX(1.0932);-webkit-text-stroke:0.3px #000;">answered</span>
<span class="t" style="left:1292.76px;top:708.80px;font:italic normal 35.5px/40px 'Liberation Serif';color:#000;transform:scaleX(1.0381);-webkit-text-stroke:0.3px #000;">and</span>
<span class="t" style="left:1360.10px;top:708.80px;font:italic normal 35.5px/40px 'Liberation Serif';color:#000;transform:scaleX(0.9965);-webkit-text-stroke:0.3px #000;">say</span>
<span class="t" style="left:1417.50px;top:708.80px;font:italic normal 35.5px/40px 'Liberation Serif';color:#000;transform:scaleX(1.0811);-webkit-text-stroke:0.3px #000;">goodbye.</span>
<span class="t" style="left:332.94px;top:795.00px;font:italic normal 35.5px/40px 'Liberation Serif';color:#000;transform:scaleX(1.0439);-webkit-text-stroke:0.3px #000;">If</span>
<span class="t" style="left:361.91px;top:795.00px;font:italic normal 35.5px/40px 'Liberation Serif';color:#000;transform:scaleX(1.0934);-webkit-text-stroke:0.3px #000;">the</span>
<span class="t" style="left:421.01px;top:795.00px;font:italic normal 35.5px/40px 'Liberation Serif';color:#000;transform:scaleX(1.0107);-webkit-text-stroke:0.3px #000;">Person</span>
<span class="t" style="left:533.43px;top:795.00px;font:italic normal 35.5px/40px 'Liberation Serif';color:#000;transform:scaleX(0.9697);-webkit-text-stroke:0.3px #000;">is</span>
<span class="t" style="left:565.45px;top:795.00px;font:italic normal 35.5px/40px 'Liberation Serif';color:#000;transform:scaleX(1.0489);-webkit-text-stroke:0.3px #000;">available:</span>
<span class="t" style="left:727.08px;top:795.00px;font:italic normal 35.5px/40px 'Liberation Serif';color:#000;transform:scaleX(0.9764);-webkit-text-stroke:0.3px #000;">First</span>
<span class="t" style="left:805.43px;top:795.00px;font:italic normal 35.5px/40px 'Liberation Serif';color:#000;transform:scaleX(1.0736);-webkit-text-stroke:0.3px #000;">confirm</span>
<span class="t" style="left:933.08px;top:795.00px;font:italic normal 35.5px/40px 'Liberation Serif';color:#000;transform:scaleX(1.1199);-webkit-text-stroke:0.3px #000;">that</span>
<span class="t" style="left:1008.47px;top:795.00px;font:italic normal 35.5px/40px 'Liberation Serif';color:#000;transform:scaleX(0.9905);-webkit-text-stroke:0.3px #000;">you</span>
<span class="t" style="left:1069.91px;top:795.00px;font:italic normal 35.5px/40px 'Liberation Serif';color:#000;transform:scaleX(1.0916);-webkit-text-stroke:0.3px #000;">are</span>
<span class="t" style="left:1130.20px;top:795.00px;font:italic normal 35.5px/40px 'Liberation Serif';color:#000;transform:scaleX(1.0882);-webkit-text-stroke:0.3px #000;">speaking</span>
<span class="t" style="left:1276.49px;top:795.00px;font:italic normal 35.5px/40px 'Liberation Serif';color:#000;transform:scaleX(1.1058);-webkit-text-stroke:0.3px #000;">to</span>
<span class="t" style="left:1315.98px;top:795.00px;font:italic normal 35.5px/40px 'Liberation Serif';color:#000;transform:scaleX(1.1246);-webkit-text-stroke:0.3px #000;">the</span>
<span class="t" style="left:1373.74px;top:795.00px;font:italic normal 35.5px/40px 'Liberation Serif';color:#000;transform:scaleX(1.0609);-webkit-text-stroke:0.3px #000;">correct</span>
<span class="t" style="left:1495.74px;top:795.00px;font:italic normal 35.5px/40px 'Liberation Serif';color:#000;transform:scaleX(1.0470);-webkit-text-stroke:0.3px #000;">person.</span>
<span class="t" style="left:330.12px;top:881.70px;font:normal bold 35.5px/40px 'Liberation Serif';color:#000;transform:scaleX(1.0835);">Study</span>
<span class="t" style="left:436.20px;top:881.70px;font:normal bold 35.5px/40px 'Liberation Serif';color:#000;transform:scaleX(1.1265);">Team:</span>
<span class="t" style="left:551.60px;top:881.70px;font:normal normal 35.5px/40px 'Liberation Serif';color:#000;transform:scaleX(1.0546);-webkit-text-stroke:0.3px #000;">This</span>
<span class="t" style="left:628.80px;top:881.70px;font:normal normal 35.5px/40px 'Liberation Serif';color:#000;transform:scaleX(0.9535);-webkit-text-stroke:0.3px #000;">is</span>
<span class="t" style="left:662.63px;top:881.70px;font:normal normal 35.5px/40px 'Liberation Serif';color:#000;transform:scaleX(1.0333);-webkit-text-stroke:0.3px #000;">[</span>
<span class="t" style="left:674.48px;top:881.70px;font:italic normal 35.5px/40px 'Liberation Serif';color:#000;transform:scaleX(1.1193);-webkit-text-stroke:0.3px #000;">name</span>
<span class="t" style="left:760.27px;top:881.70px;font:normal normal 35.5px/40px 'Liberation Serif';color:#000;transform:scaleX(1.0333);-webkit-text-stroke:0.3px #000;">]</span>
<span class="t" style="left:782.06px;top:881.70px;font:normal normal 35.5px/40px 'Liberation Serif';color:#000;transform:scaleX(1.0401);-webkit-text-stroke:0.3px #000;">calling</span>
<span class="t" style="left:894.23px;top:881.70px;font:normal normal 35.5px/40px 'Liberation Serif';color:#000;transform:scaleX(1.0703);-webkit-text-stroke:0.3px #000;">from</span>
<span class="t" style="left:980.60px;top:881.70px;font:normal normal 35.5px/40px 'Liberation Serif';color:#000;transform:scaleX(1.1335);-webkit-text-stroke:0.3px #000;">the</span>
<span class="t" style="left:1041.30px;top:881.70px;font:normal normal 35.5px/40px 'Liberation Serif';color:#000;transform:scaleX(0.9028);-webkit-text-stroke:0.3px #000;">UCSF</span>
<span class="t" style="left:1131.23px;top:881.70px;font:normal normal 35.5px/40px 'Liberation Serif';color:#000;transform:scaleX(1.0333);-webkit-text-stroke:0.3px #000;">[</span>
<span class="t" style="left:1143.99px;top:881.70px;font:italic normal 35.5px/40px 'Liberation Serif';color:#000;transform:scaleX(1.1073);-webkit-text-stroke:0.3px #000;">name</span>
<span class="t" style="left:1237.51px;top:881.70px;font:italic normal 35.5px/40px 'Liberation Serif';color:#000;transform:scaleX(1.0862);-webkit-text-stroke:0.3px #000;">of</span>
<span class="t" style="left:1275.00px;top:881.70px;font:italic normal 35.5px/40px 'Liberation Serif';color:#000;transform:scaleX(1.1118);-webkit-text-stroke:0.3px #000;">group</span>
<span class="t" style="left:1367.55px;top:881.70px;font:normal normal 35.5px/40px 'Liberation Serif';color:#000;transform:scaleX(1.0493);-webkit-text-stroke:0.3px #000;">].</span>
<span class="t" style="left:1397.33px;top:881.70px;font:normal normal 35.5px/40px 'Liberation Serif';color:#000;transform:scaleX(0.8700);-webkit-text-stroke:0.3px #000;">I</span>
<span class="t" style="left:1417.31px;top:881.70px;font:normal normal 35.5px/40px 'Liberation Serif';color:#000;transform:scaleX(1.0946);-webkit-text-stroke:0.3px #000;">am</span>
<span class="t" style="left:330.87px;top:925.80px;font:normal normal 35.5px/40px 'Liberation Serif';color:#000;transform:scaleX(1.0333);-webkit-text-stroke:0.3px #000;">a</span>
<span class="t" style="left:357.81px;top:925.80px;font:normal normal 35.5px/40px 'Liberation Serif';color:#000;transform:scaleX(1.0444);-webkit-text-stroke:0.3px #000;">[</span>
<span class="t" style="left:375.01px;top:925.80px;font:italic normal 35.5px/40px 'Liberation Serif';color:#000;transform:scaleX(1.1028);-webkit-text-stroke:0.3px #000;">physician/researcher/coordinator</span>
<span class="t" style="left:899.87px;top:925.80px;font:normal normal 35.5px/40px 'Liberation Serif';color:#000;transform:scaleX(1.0333);-webkit-text-stroke:0.3px #000;">]</span>
<span class="t" style="left:924.90px;top:925.80px;font:normal normal 35.5px/40px 'Liberation Serif';color:#000;transform:scaleX(1.0820);-webkit-text-stroke:0.3px #000;">working</span>
<span class="t" style="left:1064.70px;top:925.80px;font:normal normal 35.5px/40px 'Liberation Serif';color:#000;transform:scaleX(1.0827);-webkit-text-stroke:0.3px #000;">with</span>
<span class="t" style="left:1144.05px;top:925.80px;font:normal normal 35.5px/40px 'Liberation Serif';color:#000;transform:scaleX(1.0506);-webkit-text-stroke:0.3px #000;">Dr.</span>
<span class="t" style="left:1199.71px;top:925.80px;font:normal normal 35.5px/40px 'Liberation Serif';color:#000;transform:scaleX(1.0444);-webkit-text-stroke:0.3px #000;">[</span>
<span class="t" style="left:1209.93px;top:925.80px;font:italic normal 35.5px/40px 'Liberation Serif';color:#000;transform:scaleX(0.9237);-webkit-text-stroke:0.3px #000;">UCSF</span>
<span class="t" style="left:1302.03px;top:925.80px;font:italic normal 35.5px/40px 'Liberation Serif';color:#000;transform:scaleX(1.0651);-webkit-text-stroke:0.3px #000;">researcher’s</span>
<span class="t" style="left:1497.39px;top:925.80px;font:italic normal 35.5px/40px 'Liberation Serif';color:#000;transform:scaleX(1.1113);-webkit-text-stroke:0.3px #000;">name</span>
<span class="t" style="left:1582.55px;top:925.80px;font:normal normal 35.5px/40px 'Liberation Serif';color:#000;transform:scaleX(1.0493);-webkit-text-stroke:0.3px #000;">].</span>
<span class="t" style="left:330.88px;top:969.30px;font:normal normal 35.5px/40px 'Liberation Serif';color:#000;transform:scaleX(1.0201);-webkit-text-stroke:0.3px #000;">Is</span>
<span class="t" style="left:368.00px;top:969.30px;font:normal normal 35.5px/40px 'Liberation Serif';color:#000;transform:scaleX(1.1114);-webkit-text-stroke:0.3px #000;">this</span>
<span class="t" style="left:434.53px;top:969.30px;font:normal normal 35.5px/40px 'Liberation Serif';color:#000;transform:scaleX(1.0746);-webkit-text-stroke:0.3px #000;">an</span>
<span class="t" style="left:481.45px;top:969.30px;font:normal normal 35.5px/40px 'Liberation Serif';color:#000;transform:scaleX(0.9499);-webkit-text-stroke:0.3px #000;">Ok</span>
<span class="t" style="left:534.40px;top:969.30px;font:normal normal 35.5px/40px 'Liberation Serif';color:#000;transform:scaleX(1.1004);-webkit-text-stroke:0.3px #000;">time</span>
<span class="t" style="left:613.11px;top:969.30px;font:normal normal 35.5px/40px 'Liberation Serif';color:#000;transform:scaleX(1.0894);-webkit-text-stroke:0.3px #000;">for</span>
<span class="t" style="left:667.80px;top:969.30px;font:normal normal 35.5px/40px 'Liberation Serif';color:#000;transform:scaleX(1.0486);-webkit-text-stroke:0.3px #000;">you</span>
<span class="t" style="left:735.70px;top:969.30px;font:normal normal 35.5px/40px 'Liberation Serif';color:#000;transform:scaleX(1.0684);-webkit-text-stroke:0.3px #000;">to</span>
<span class="t" style="left:775.09px;top:969.30px;font:normal normal 35.5px/40px 'Liberation Serif';color:#000;transform:scaleX(1.1073);-webkit-text-stroke:0.3px #000;">speak?</span>
<span class="t" style="left:332.94px;top:1056.50px;font:italic normal 35.5px/40px 'Liberation Serif';color:#000;transform:scaleX(1.0439);-webkit-text-stroke:0.3px #000;">If</span>
<span class="t" style="left:361.91px;top:1056.50px;font:italic normal 35.5px/40px 'Liberation Serif';color:#000;transform:scaleX(1.0934);-webkit-text-stroke:0.3px #000;">the</span>
<span class="t" style="left:421.01px;top:1056.50px;font:italic normal 35.5px/40px 'Liberation Serif';color:#000;transform:scaleX(1.0107);-webkit-text-stroke:0.3px #000;">Person</span>
<span class="t" style="left:533.20px;top:1056.50px;font:italic normal 35.5px/40px 'Liberation Serif';color:#000;transform:scaleX(1.0427);-webkit-text-stroke:0.3px #000;">says</span>
<span class="t" style="left:603.51px;top:1056.50px;font:italic normal 35.5px/40px 'Liberation Serif';color:#000;transform:scaleX(0.8979);-webkit-text-stroke:0.3px #000;">“No”</span>
<span class="t" style="left:684.89px;top:1056.50px;font:italic normal 35.5px/40px 'Liberation Serif';color:#000;transform:scaleX(1.0114);-webkit-text-stroke:0.3px #000;">or</span>
<span class="t" style="left:724.98px;top:1056.50px;font:italic normal 35.5px/40px 'Liberation Serif';color:#000;transform:scaleX(0.9040);-webkit-text-stroke:0.3px #000;">“I’m</span>
<span class="t" style="left:797.64px;top:1056.50px;font:italic normal 35.5px/40px 'Liberation Serif';color:#000;transform:scaleX(1.0615);-webkit-text-stroke:0.3px #000;">not</span>
<span class="t" style="left:857.90px;top:1056.50px;font:italic normal 35.5px/40px 'Liberation Serif';color:#000;transform:scaleX(1.0409);-webkit-text-stroke:0.3px #000;">sure”</span>
<span class="t" style="left:330.12px;top:1143.60px;font:normal bold 35.5px/40px 'Liberation Serif';color:#000;transform:scaleX(1.0835);">Study</span>
<span class="t" style="left:436.20px;top:1143.60px;font:normal bold 35.5px/40px 'Liberation Serif';color:#000;transform:scaleX(1.1203);">Team</span>
<span class="t" style="left:531.08px;top:1143.60px;font:normal normal 35.5px/40px 'Liberation Serif';color:#000;transform:scaleX(1.1600);-webkit-text-stroke:0.3px #000;">:</span>
<span class="t" style="left:549.84px;top:1143.60px;font:normal normal 35.5px/40px 'Liberation Serif';color:#000;transform:scaleX(1.0634);-webkit-text-stroke:0.3px #000;">Okay.</span>
<span class="t" style="left:646.88px;top:1143.60px;font:normal normal 35.5px/40px 'Liberation Serif';color:#000;transform:scaleX(1.1111);-webkit-text-stroke:0.3px #000;">[</span>
<span class="t" style="left:662.75px;top:1143.60px;font:italic normal 35.5px/40px 'Liberation Serif';color:#000;transform:scaleX(0.9266);-webkit-text-stroke:0.3px #000;">Ask</span>
<span class="t" style="left:722.78px;top:1143.60px;font:italic normal 35.5px/40px 'Liberation Serif';color:#000;transform:scaleX(1.1153);-webkit-text-stroke:0.3px #000;">if</span>
<span class="t" style="left:754.39px;top:1143.60px;font:italic normal 35.5px/40px 'Liberation Serif';color:#000;transform:scaleX(1.0316);-webkit-text-stroke:0.3px #000;">you</span>
<span class="t" style="left:816.39px;top:1143.60px;font:italic normal 35.5px/40px 'Liberation Serif';color:#000;transform:scaleX(1.0059);-webkit-text-stroke:0.3px #000;">can</span>
<span class="t" style="left:878.10px;top:1143.60px;font:italic normal 35.5px/40px 'Liberation Serif';color:#000;transform:scaleX(1.0701);-webkit-text-stroke:0.3px #000;">schedule</span>
<span class="t" style="left:1020.00px;top:1143.60px;font:italic normal 35.5px/40px 'Liberation Serif';color:#000;transform:scaleX(1.1029);-webkit-text-stroke:0.3px #000;">another</span>
<span class="t" style="left:1150.90px;top:1143.60px;font:italic normal 35.5px/40px 'Liberation Serif';color:#000;transform:scaleX(1.1017);-webkit-text-stroke:0.3px #000;">time</span>
<span class="t" style="left:1228.82px;top:1143.60px;font:italic normal 35.5px/40px 'Liberation Serif';color:#000;transform:scaleX(1.0826);-webkit-text-stroke:0.3px #000;">to</span>
<span class="t" style="left:1268.72px;top:1143.60px;font:italic normal 35.5px/40px 'Liberation Serif';color:#000;transform:scaleX(1.0801);-webkit-text-stroke:0.3px #000;">talk.</span>
<span class="t" style="left:1346.85px;top:1143.60px;font:italic normal 35.5px/40px 'Liberation Serif';color:#000;transform:scaleX(1.0477);-webkit-text-stroke:0.3px #000;">If</span>
<span class="t" style="left:1375.89px;top:1143.60px;font:italic normal 35.5px/40px 'Liberation Serif';color:#000;transform:scaleX(1.1078);-webkit-text-stroke:0.3px #000;">the</span>
<span class="t" style="left:1436.49px;top:1143.60px;font:italic normal 35.5px/40px 'Liberation Serif';color:#000;transform:scaleX(1.0305);-webkit-text-stroke:0.3px #000;">person</span>
<span class="t" style="left:1546.14px;top:1143.60px;font:italic normal 35.5px/40px 'Liberation Serif';color:#000;transform:scaleX(0.9560);-webkit-text-stroke:0.3px #000;">is</span>
<span class="t" style="left:1578.39px;top:1143.60px;font:italic normal 35.5px/40px 'Liberation Serif';color:#000;transform:scaleX(1.1055);-webkit-text-stroke:0.3px #000;">not</span>
<span class="t" style="left:102.96px;top:243.60px;font:normal normal 13.5px/15px 'Liberation Sans';color:#858585;transform:scaleX(0.9200);">1</span>
<span class="t" style="left:548.40px;top:243.60px;font:normal normal 13.5px/15px 'Liberation Sans';color:#858585;transform:scaleX(0.9200);">1</span>
<span class="t" style="left:771.44px;top:243.60px;font:normal normal 13.5px/15px 'Liberation Sans';color:#858585;transform:scaleX(0.9200);">2</span>
<span class="t" style="left:994.16px;top:243.60px;font:normal normal 13.5px/15px 'Liberation Sans';color:#858585;transform:scaleX(0.9200);">3</span>
<span class="t" style="left:1216.88px;top:243.60px;font:normal normal 13.5px/15px 'Liberation Sans';color:#858585;transform:scaleX(0.9200);">4</span>
<span class="t" style="left:1439.60px;top:243.60px;font:normal normal 13.5px/15px 'Liberation Sans';color:#858585;transform:scaleX(0.9200);">5</span>
<span class="t" style="left:1662.32px;top:243.60px;font:normal normal 13.5px/15px 'Liberation Sans';color:#858585;transform:scaleX(0.9200);">6</span>
<span class="t" style="left:1885.04px;top:243.60px;font:normal normal 13.5px/15px 'Liberation Sans';color:#858585;transform:scaleX(0.9200);">7</span>
<span class="t" style="left:546.38px;top:1187.60px;font:italic normal 35.5px/40px 'Liberation Serif';color:#000;transform:scaleX(1.1200);clip-path:inset(0 0 24.6px 0);">l</span>
<span class="t" style="left:599.38px;top:1187.60px;font:italic normal 35.5px/40px 'Liberation Serif';color:#000;transform:scaleX(1.1200);clip-path:inset(0 0 24.6px 0);">it</span>
<span class="t" style="left:660.38px;top:1187.60px;font:italic normal 35.5px/40px 'Liberation Serif';color:#000;transform:scaleX(1.1200);clip-path:inset(0 0 24.6px 0);">t</span>
<span class="t" style="left:689.38px;top:1187.60px;font:italic normal 35.5px/40px 'Liberation Serif';color:#000;transform:scaleX(1.1200);clip-path:inset(0 0 24.6px 0);">thank him/her and</span>
<span class="t" style="left:1116.88px;top:1187.60px;font:italic normal 35.5px/40px 'Liberation Serif';color:#000;transform:scaleX(1.1200);clip-path:inset(0 0 24.6px 0);">ll</span>
<span class="t" style="left:1184.38px;top:1187.60px;font:normal normal 35.5px/40px 'Liberation Serif';color:#000;transform:scaleX(1.1200);clip-path:inset(0 0 24.6px 0);">]</span>
<span class="t" style="left:758.70px;top:78.70px;font:normal normal 17px/19px 'Liberation Sans';color:#3b8dd4;transform:scaleX(0.8100);">a</span>
<span class="t" style="left:766.40px;top:90.10px;font:normal normal 18.4px/21px 'Liberation Sans';color:#474747;transform:scaleX(0.8500);">d</span>
<span class="t" style="left:790.60px;top:74.00px;font:normal normal 21px/23px 'Liberation Sans';color:#474747;transform:scaleX(0.9593);">abc</span>
<span class="t" style="left:1061.20px;top:80.80px;font:normal normal 19.8px/22px 'Liberation Sans';color:#3b8dd4;transform:scaleX(0.9071);">A</span>
<span class="t" style="left:1369.23px;top:86.90px;font:normal normal 13.6px/15px 'Liberation Sans';color:#e23b39;transform:scaleX(0.9667);">1</span>
<span class="t" style="left:1420.60px;top:93.30px;font:normal bold 15px/17px 'Liberation Sans';color:#3b8dd4;transform:scaleX(0.9038);">[i]</span>
<span class="t" style="left:748.07px;top:134.90px;font:normal bold 27.4px/31px 'Liberation Sans';color:#3d3d3d;transform:scaleX(0.8333);">B</span>
<span class="t" style="left:801.46px;top:134.90px;font:italic normal 28px/31px 'Liberation Serif';color:#3d3d3d;transform:scaleX(0.8583);">I</span>
<span class="t" style="left:841.15px;top:135.70px;font:normal normal 27px/30px 'Liberation Sans';color:#474747;transform:scaleX(0.9750);">U</span>
<span class="t" style="left:910.22px;top:135.80px;font:normal normal 27px/30px 'Liberation Sans';color:#474747;transform:scaleX(0.7812);">S</span>
<span class="t" style="left:966.70px;top:132.20px;font:normal normal 28px/31px 'Liberation Sans';color:#474747;transform:scaleX(0.8929);">x</span>
<span class="t" style="left:981.00px;top:135.00px;font:normal bold 14px/16px 'Liberation Sans';color:#3b8dd4;transform:scaleX(0.9375);">2</span>
<span class="t" style="left:1014.70px;top:132.20px;font:normal normal 28px/31px 'Liberation Sans';color:#474747;transform:scaleX(0.8786);">x</span>
<span class="t" style="left:1029.00px;top:148.40px;font:normal bold 14px/16px 'Liberation Sans';color:#3b8dd4;transform:scaleX(0.9125);">2</span>
<span class="t" style="left:1074.13px;top:133.20px;font:italic normal 26.5px/30px 'Liberation Sans';color:#474747;transform:scaleX(0.8158);">A</span>
<span class="t" style="left:1132.00px;top:132.40px;font:normal normal 27px/30px 'Liberation Sans';color:#3d3d3d;transform:scaleX(0.9722);">A</span>
<span class="t" style="left:1190.60px;top:133.60px;font:normal normal 17.5px/20px 'Liberation Sans';color:#fff;transform:scaleX(1.0143);">ab</span>
<span class="t" style="left:1533.00px;top:132.40px;font:normal normal 12.5px/14px 'Liberation Sans';color:#3b8dd4;transform:scaleX(0.6571);">1</span>
<span class="t" style="left:1532.20px;top:143.90px;font:normal normal 12.5px/14px 'Liberation Sans';color:#3b8dd4;transform:scaleX(0.8286);">2</span>
<span class="t" style="left:1532.20px;top:155.40px;font:normal normal 12.5px/14px 'Liberation Sans';color:#3b8dd4;transform:scaleX(0.8286);">3</span>
<span class="t" style="left:1596.40px;top:133.70px;font:normal bold 11.5px/12px 'Liberation Sans';color:#3b8dd4;transform:scaleX(0.6857);">1</span>
<span class="t" style="left:1076.00px;top:1276.00px;font:normal bold 9.6px/11px 'Liberation Sans';color:#111;transform:scaleX(0.9839);">PRE</span>

</body></html>
